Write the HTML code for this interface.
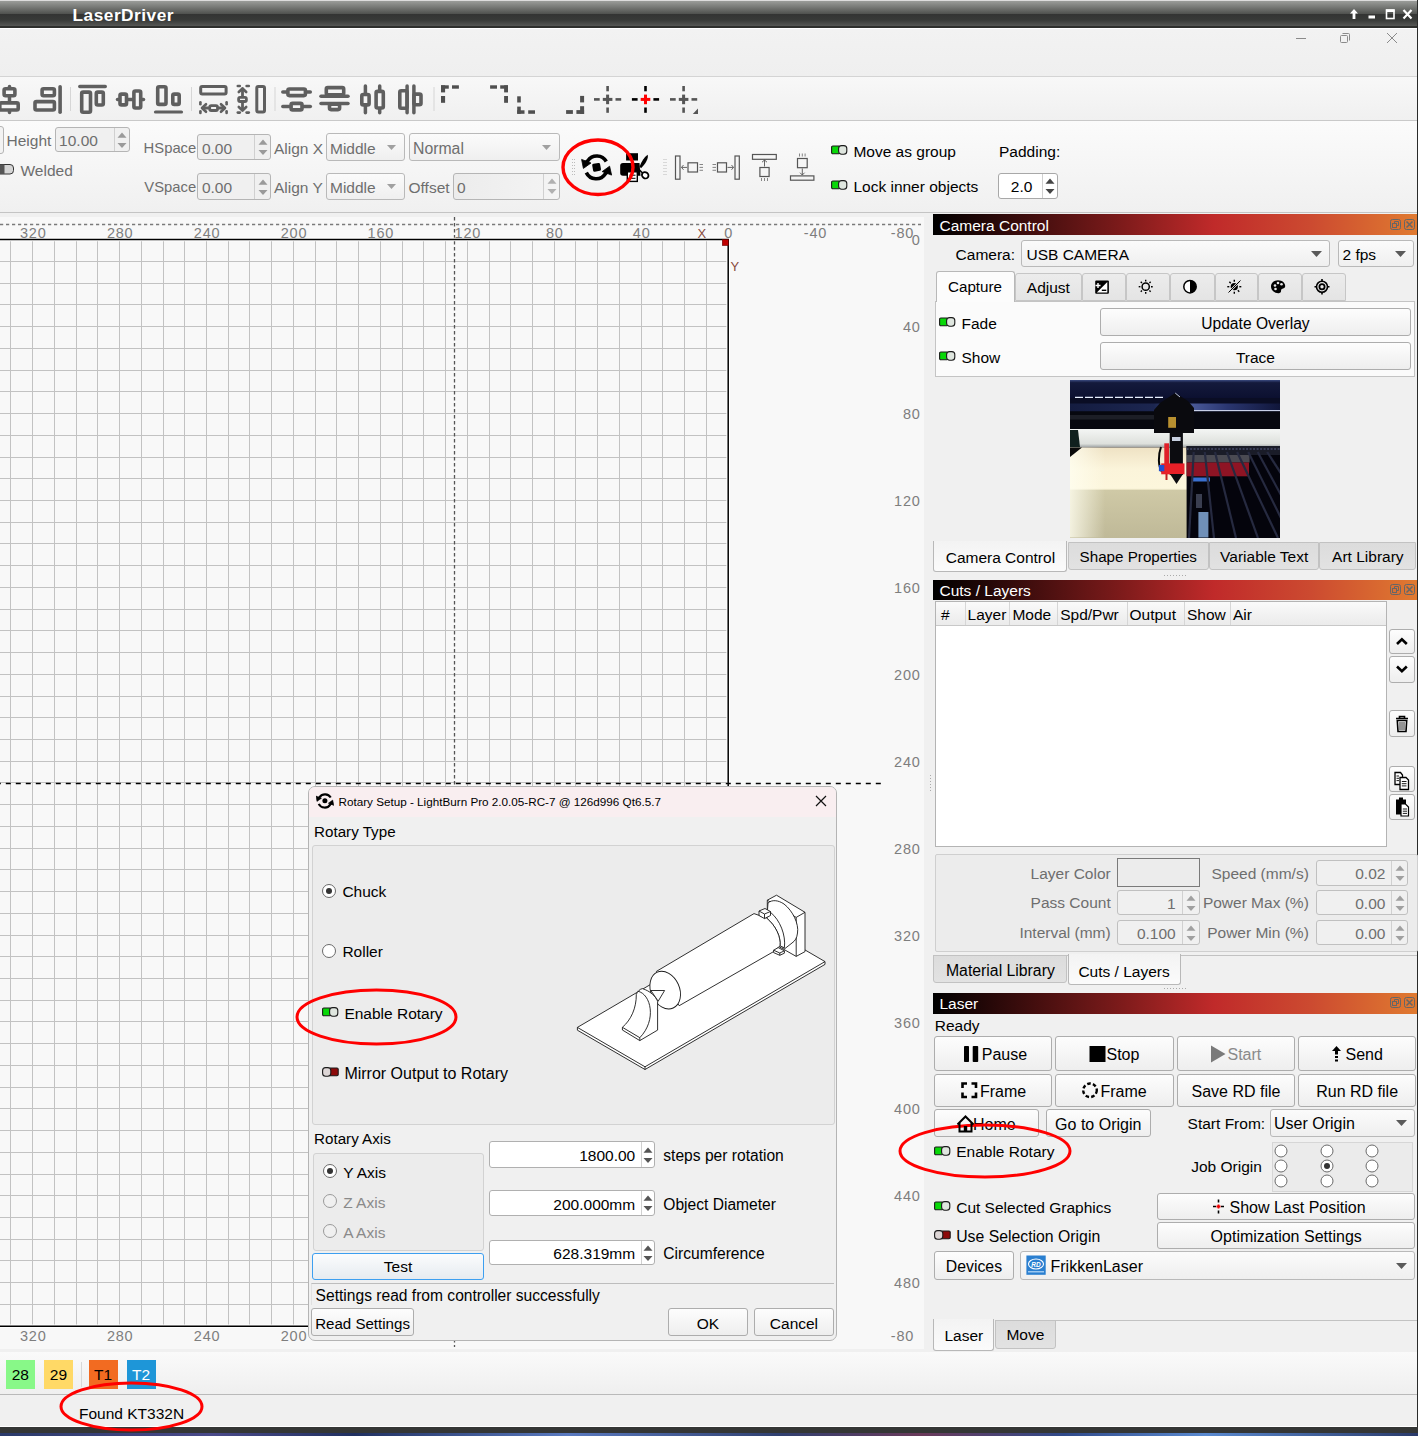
<!DOCTYPE html><html><head><meta charset="utf-8"><style>
html,body{margin:0;padding:0;}body{width:1418px;height:1436px;position:relative;overflow:hidden;background:#f0f0f0;font-family:"Liberation Sans", sans-serif;}
.t{position:absolute;white-space:nowrap;font-family:"Liberation Sans",sans-serif;}
</style></head><body>
<div style="position:absolute;left:0px;top:0px;width:1418px;height:28px;box-sizing:border-box;background:linear-gradient(#dcdcdc 0px,#dcdcdc 1px,#9a9c99 1px,#4f514e 14px,#333433 14px,#383a38 20px,#565755 26px,#2e2f2d 26px,#2e2f2d 28px);"></div>
<div class="t" style="left:72.5px;top:6.75px;font-size:17.3px;line-height:17.3px;color:#fff;font-weight:bold;letter-spacing:0.5px;">LaserDriver</div>
<svg style="position:absolute;left:1348px;top:8px" width="68" height="12"><path d="M6 1L2 5.5H4.6V11H7.4V5.5H10Z" fill="#fff"/><rect x="20.5" y="7.5" width="6.5" height="3" fill="#fff"/><rect x="38.5" y="2" width="7.5" height="8.5" fill="none" stroke="#fff" stroke-width="1.6"/><rect x="38" y="1.5" width="8.5" height="2.5" fill="#fff"/><path d="M55.5 2L63.5 10.5M63.5 2L55.5 10.5" stroke="#fff" stroke-width="2.2"/></svg>
<div style="position:absolute;left:1417px;top:0px;width:1px;height:1436px;box-sizing:border-box;background:#2a2b2a;"></div>
<div style="position:absolute;left:0px;top:28px;width:1417px;height:1px;box-sizing:border-box;background:#fff;"></div>
<div style="position:absolute;left:0px;top:29px;width:1417px;height:47px;box-sizing:border-box;background:linear-gradient(#f2f2f2,#efefef);"></div>
<svg style="position:absolute;left:1290px;top:30px" width="112" height="16"><path d="M6 8.5H16" stroke="#8a8a8a" stroke-width="1"/><rect x="50.5" y="5.5" width="7" height="7" rx="1" fill="none" stroke="#8a8a8a"/><path d="M52.5 3.5H58.5A1 1 0 0 1 59.5 4.5V10.5" fill="none" stroke="#8a8a8a"/><path d="M97 3L107 13M107 3L97 13" stroke="#8a8a8a" stroke-width="1"/></svg>
<div style="position:absolute;left:0px;top:76px;width:1417px;height:1px;box-sizing:border-box;background:#d4d4d4;"></div>
<div style="position:absolute;left:0px;top:77px;width:1417px;height:43px;box-sizing:border-box;background:linear-gradient(#f8f8f8,#f0f0f0);"></div>
<div style="position:absolute;left:0px;top:120px;width:1417px;height:1px;box-sizing:border-box;background:#c9c9c9;"></div>
<div style="position:absolute;left:0px;top:121px;width:1417px;height:91px;box-sizing:border-box;background:linear-gradient(#fbfbfb,#f0f0f0);"></div>
<div style="position:absolute;left:0px;top:212px;width:1417px;height:1px;box-sizing:border-box;background:#c4c4c4;"></div>
<div style="position:absolute;left:0px;top:213px;width:1417px;height:4px;box-sizing:border-box;background:#f0f0f0;"></div>
<svg style="position:absolute;left:0;top:0" width="1418" height="213"><path d="M9.5 86.5L9.5 112.5" stroke="#5f5f5f" stroke-width="3.5" stroke-linecap="round"/><rect x="4.1" y="88.8" width="10.799999999999999" height="6.9" rx="1.5" fill="#f6f6f6" stroke="#5f5f5f" stroke-width="3.6"/><rect x="-0.19999999999999996" y="102.89999999999999" width="18.4" height="7.100000000000003" rx="1.5" fill="#f6f6f6" stroke="#5f5f5f" stroke-width="3.6"/><rect x="42.099999999999994" y="88.8" width="12.300000000000006" height="6.9" rx="1.5" fill="none" stroke="#5f5f5f" stroke-width="3.6"/><rect x="35.0" y="101.6" width="19.4" height="8.4" rx="1.5" fill="none" stroke="#5f5f5f" stroke-width="3.6"/><path d="M60.1 86.8L60.1 112.3" stroke="#5f5f5f" stroke-width="3.6" stroke-linecap="round"/><rect x="70" y="87" width="1" height="24" fill="#d6d6d6"/><path d="M79.8 86.5L105.3 86.5" stroke="#5f5f5f" stroke-width="3.4" stroke-linecap="round"/><rect x="81.7" y="92.1" width="8.799999999999992" height="20.199999999999996" rx="1.5" fill="none" stroke="#5f5f5f" stroke-width="3.6"/><rect x="96.3" y="92.1" width="6.999999999999995" height="12.9" rx="1.5" fill="none" stroke="#5f5f5f" stroke-width="3.6"/><path d="M117.5 99.5L143.5 99.5" stroke="#5f5f5f" stroke-width="3.5" stroke-linecap="round"/><rect x="120.0" y="94.1" width="6.500000000000009" height="10.800000000000006" rx="1.5" fill="#f5f5f5" stroke="#5f5f5f" stroke-width="3.6"/><rect x="133.9" y="91.0" width="6.800000000000006" height="16.999999999999993" rx="1.5" fill="#f5f5f5" stroke="#5f5f5f" stroke-width="3.6"/><rect x="157.70000000000002" y="86.8" width="8.300000000000006" height="17.6" rx="1.5" fill="none" stroke="#5f5f5f" stroke-width="3.6"/><rect x="172.8" y="94.1" width="6.4" height="10.300000000000006" rx="1.5" fill="none" stroke="#5f5f5f" stroke-width="3.6"/><path d="M155.5 112L181.5 112" stroke="#5f5f5f" stroke-width="3.2" stroke-linecap="round"/><rect x="191" y="87" width="1" height="24" fill="#d6d6d6"/><rect x="200.7" y="86.5" width="25.400000000000006" height="7.599999999999994" rx="1.5" fill="none" stroke="#5f5f5f" stroke-width="3"/><path d="M200.4 102.3L200.4 104.3" stroke="#5f5f5f" stroke-width="2.6" stroke-linecap="round"/><path d="M200.4 111.3L200.4 113" stroke="#5f5f5f" stroke-width="2.6" stroke-linecap="round"/><path d="M226.6 102.3L226.6 104.3" stroke="#5f5f5f" stroke-width="2.6" stroke-linecap="round"/><path d="M226.6 111.3L226.6 113" stroke="#5f5f5f" stroke-width="2.6" stroke-linecap="round"/><rect x="209.70000000000002" y="105.7" width="7.7999999999999945" height="4.800000000000009" rx="1.5" fill="none" stroke="#5f5f5f" stroke-width="2.8"/><path d="M203 108L208.3 108" stroke="#5f5f5f" stroke-width="2.8" stroke-linecap="round"/><path d="M218.9 108L224 108" stroke="#5f5f5f" stroke-width="2.8" stroke-linecap="round"/><path d="M206 104.2L202 108L206 111.8M221 104.2L225 108L221 111.8" fill="none" stroke="#5f5f5f" stroke-width="2.6" stroke-linejoin="round" stroke-linecap="round"/><path d="M237.8 86L239.8 86" stroke="#5f5f5f" stroke-width="2.6" stroke-linecap="round"/><path d="M246.6 86L248.8 86" stroke="#5f5f5f" stroke-width="2.6" stroke-linecap="round"/><path d="M237.8 112.6L239.8 112.6" stroke="#5f5f5f" stroke-width="2.6" stroke-linecap="round"/><path d="M246.6 112.6L248.8 112.6" stroke="#5f5f5f" stroke-width="2.6" stroke-linecap="round"/><rect x="238.6" y="97.4" width="7.800000000000023" height="4.100000000000006" rx="1.5" fill="none" stroke="#5f5f5f" stroke-width="2.8"/><path d="M242.5 89L242.5 96" stroke="#5f5f5f" stroke-width="2.8" stroke-linecap="round"/><path d="M242.5 102.9L242.5 110" stroke="#5f5f5f" stroke-width="2.8" stroke-linecap="round"/><path d="M238.8 92L242.5 88.3L246.2 92M238.8 107L242.5 110.7L246.2 107" fill="none" stroke="#5f5f5f" stroke-width="2.6" stroke-linejoin="round" stroke-linecap="round"/><rect x="256.8" y="86.5" width="7.699999999999989" height="25.5" rx="1.5" fill="none" stroke="#5f5f5f" stroke-width="3"/><rect x="274.5" y="87" width="1" height="24" fill="#d6d6d6"/><path d="M282.8 91.9L310.3 91.9" stroke="#5f5f5f" stroke-width="3.5" stroke-linecap="round"/><rect x="287.90000000000003" y="89.0" width="17.499999999999964" height="6.600000000000003" rx="1.5" fill="#f5f5f5" stroke="#5f5f5f" stroke-width="3.6"/><path d="M282.8 106.6L310.3 106.6" stroke="#5f5f5f" stroke-width="3.5" stroke-linecap="round"/><rect x="291.1" y="103.39999999999999" width="10.9" height="6.500000000000009" rx="1.5" fill="#f5f5f5" stroke="#5f5f5f" stroke-width="3.6"/><rect x="326.3" y="87.6" width="17.4" height="7.100000000000003" rx="1.5" fill="#f5f5f5" stroke="#5f5f5f" stroke-width="3.6"/><path d="M321 96.2L348 96.2" stroke="#5f5f5f" stroke-width="3.5" stroke-linecap="round"/><path d="M321 103.5L348 103.5" stroke="#5f5f5f" stroke-width="3.5" stroke-linecap="round"/><rect x="329.5" y="104.3" width="10.099999999999989" height="5.300000000000006" rx="1.5" fill="#f5f5f5" stroke="#5f5f5f" stroke-width="3.6"/><path d="M365.4 86L365.4 112.8" stroke="#5f5f5f" stroke-width="3.5" stroke-linecap="round"/><path d="M379.7 86L379.7 112.8" stroke="#5f5f5f" stroke-width="3.5" stroke-linecap="round"/><rect x="361.8" y="94.5" width="7.299999999999978" height="10.4" rx="1.5" fill="#f5f5f5" stroke="#5f5f5f" stroke-width="3.6"/><rect x="376.1" y="91.39999999999999" width="7.200000000000012" height="16.6" rx="1.5" fill="#f5f5f5" stroke="#5f5f5f" stroke-width="3.6"/><rect x="399.8" y="90.8" width="7.299999999999978" height="17.4" rx="1.5" fill="none" stroke="#5f5f5f" stroke-width="3.6"/><rect x="414.0" y="94.1" width="7.000000000000023" height="10.600000000000003" rx="1.5" fill="none" stroke="#5f5f5f" stroke-width="3.6"/><path d="M407.1 86L407.1 112.8" stroke="#5f5f5f" stroke-width="3.5" stroke-linecap="round"/><path d="M413.9 86L413.9 112.8" stroke="#5f5f5f" stroke-width="3.5" stroke-linecap="round"/><rect x="433.5" y="87" width="1" height="24" fill="#d6d6d6"/><rect x="441" y="85.3" width="7.800000000000011" height="3.4000000000000057" fill="#4f4f4f"/><rect x="441" y="85.3" width="4.100000000000023" height="7.1000000000000085" fill="#4f4f4f"/><rect x="452" y="85.3" width="6.899999999999977" height="3.4000000000000057" fill="#4f4f4f"/><rect x="441" y="96" width="4.100000000000023" height="6.799999999999997" fill="#4f4f4f"/><rect x="490.1" y="85.3" width="6.899999999999977" height="3.4000000000000057" fill="#4f4f4f"/><rect x="500.2" y="85.3" width="7.800000000000011" height="3.4000000000000057" fill="#4f4f4f"/><rect x="504.1" y="85.3" width="3.8999999999999773" height="7.1000000000000085" fill="#4f4f4f"/><rect x="504.1" y="96" width="3.8999999999999773" height="6.799999999999997" fill="#4f4f4f"/><rect x="517.2" y="96.3" width="3.599999999999909" height="6.200000000000003" fill="#4f4f4f"/><rect x="517.2" y="106.6" width="3.599999999999909" height="7.200000000000003" fill="#4f4f4f"/><rect x="517.2" y="110.3" width="7.2999999999999545" height="3.5" fill="#4f4f4f"/><rect x="528.2" y="110.3" width="6.7999999999999545" height="3.5" fill="#4f4f4f"/><rect x="566.1" y="110.1" width="6.7999999999999545" height="3.8000000000000114" fill="#4f4f4f"/><rect x="576.4" y="110.1" width="7.7000000000000455" height="3.8000000000000114" fill="#4f4f4f"/><rect x="580.1" y="106.2" width="4.0" height="7.700000000000003" fill="#4f4f4f"/><rect x="580.1" y="95.9" width="4.0" height="6.5" fill="#4f4f4f"/><rect x="606.3000000000001" y="86" width="2.599999999999909" height="5.299999999999997" fill="#555"/><rect x="606.3000000000001" y="107.5" width="2.599999999999909" height="5.299999999999997" fill="#555"/><rect x="594.0" y="98.10000000000001" width="5.7000000000000455" height="2.5999999999999943" fill="#555"/><rect x="615.5" y="98.10000000000001" width="5.7000000000000455" height="2.5999999999999943" fill="#555"/><rect x="606.1" y="94.60000000000001" width="3.0" height="9.599999999999994" fill="#555"/><rect x="602.8000000000001" y="97.9" width="9.599999999999909" height="3.0" fill="#555"/><rect x="644.2" y="86" width="2.599999999999909" height="5.299999999999997" fill="#000"/><rect x="644.2" y="107.5" width="2.599999999999909" height="5.299999999999997" fill="#000"/><rect x="631.9" y="98.10000000000001" width="5.7000000000000455" height="2.5999999999999943" fill="#000"/><rect x="653.4" y="98.10000000000001" width="5.7000000000000455" height="2.5999999999999943" fill="#000"/><rect x="644.0" y="94.60000000000001" width="3.0" height="9.599999999999994" fill="#ff0000"/><rect x="640.7" y="97.9" width="9.599999999999909" height="3.0" fill="#ff0000"/><rect x="682.3000000000001" y="86" width="2.599999999999909" height="5.299999999999997" fill="#555"/><rect x="682.3000000000001" y="107.5" width="2.599999999999909" height="5.299999999999997" fill="#555"/><rect x="670.0" y="98.10000000000001" width="5.7000000000000455" height="2.5999999999999943" fill="#555"/><rect x="691.5" y="98.10000000000001" width="5.7000000000000455" height="2.5999999999999943" fill="#555"/><rect x="682.1" y="94.60000000000001" width="3.0" height="9.599999999999994" fill="#555"/><rect x="678.8000000000001" y="97.9" width="9.599999999999909" height="3.0" fill="#555"/><path d="M698 108.6V113.9H692.8Z" fill="#555"/><g><path d="M585.8 162.6L587.8 160.7A11 11 0 0 1 606.3 161.5" fill="none" stroke="#000" stroke-width="3.6"/><path d="M581.6 159.4L583.4 168.4L591 163Z" fill="#000" stroke="#000" stroke-width="0.8" stroke-linejoin="round"/><path d="M607.4 171.8L605.4 173.7A11 11 0 0 1 586.3 172.6" fill="none" stroke="#000" stroke-width="3.6"/><path d="M611.6 175.1L609.6 166.2L602.2 171.6Z" fill="#000" stroke="#000" stroke-width="0.8" stroke-linejoin="round"/><rect x="592.6" y="163.3" width="8" height="8" rx="1.5" transform="rotate(-10 596.6 167.3)" fill="#000"/></g><g><rect x="626.1" y="153.2" width="11.9" height="7.3" fill="#000"/><path d="M623 163H639.5L640.5 175.8H623A2.8 2.8 0 0 1 620.2 173V165.8A2.8 2.8 0 0 1 623 163Z" fill="#000"/><rect x="627.3" y="171.8" width="10" height="9.6" fill="#fff" stroke="#000" stroke-width="1.4"/><path d="M629.5 175.2H635.5M629.5 178.3H635.5" stroke="#000" stroke-width="1"/><path d="M647.6 154.8C649 158 645.5 164 641 168.2L639.6 166.5C641.5 161.5 644.5 157 647.6 154.8Z" fill="#000"/><path d="M639 169.5L642.5 173" stroke="#000" stroke-width="1.6"/><ellipse cx="645.2" cy="175.3" rx="3.4" ry="3" transform="rotate(35 645.2 175.3)" fill="#fff" stroke="#000" stroke-width="1.8"/></g><rect x="572" y="159" width="1" height="1" fill="#bbb"/><rect x="574" y="159" width="1" height="1" fill="#bbb"/><rect x="572" y="162" width="1" height="1" fill="#bbb"/><rect x="574" y="162" width="1" height="1" fill="#bbb"/><rect x="572" y="165" width="1" height="1" fill="#bbb"/><rect x="574" y="165" width="1" height="1" fill="#bbb"/><rect x="572" y="168" width="1" height="1" fill="#bbb"/><rect x="574" y="168" width="1" height="1" fill="#bbb"/><rect x="572" y="171" width="1" height="1" fill="#bbb"/><rect x="574" y="171" width="1" height="1" fill="#bbb"/><rect x="572" y="174" width="1" height="1" fill="#bbb"/><rect x="574" y="174" width="1" height="1" fill="#bbb"/><rect x="663.5" y="159" width="1" height="1" fill="#bbb"/><rect x="665.5" y="159" width="1" height="1" fill="#bbb"/><rect x="663.5" y="162" width="1" height="1" fill="#bbb"/><rect x="665.5" y="162" width="1" height="1" fill="#bbb"/><rect x="663.5" y="165" width="1" height="1" fill="#bbb"/><rect x="665.5" y="165" width="1" height="1" fill="#bbb"/><rect x="663.5" y="168" width="1" height="1" fill="#bbb"/><rect x="665.5" y="168" width="1" height="1" fill="#bbb"/><rect x="663.5" y="171" width="1" height="1" fill="#bbb"/><rect x="665.5" y="171" width="1" height="1" fill="#bbb"/><rect x="663.5" y="174" width="1" height="1" fill="#bbb"/><rect x="665.5" y="174" width="1" height="1" fill="#bbb"/><rect x="675.5" y="156.0" width="4.5" height="23.19999999999999" fill="none" stroke="#555" stroke-width="1.2"/><rect x="688.0" y="162.8" width="9.5" height="9.199999999999989" fill="none" stroke="#555" stroke-width="1.2"/><path d="M681.5 167.4H687M683.5 165L681.5 167.4L683.5 169.8" fill="none" stroke="#555" stroke-width="0.9"/><path d="M699.5 164.5H703M699.5 167.4H703M699.5 170.3H703" stroke="#555" stroke-width="0.7"/><rect x="735.0" y="156.0" width="4.2999999999999545" height="23.19999999999999" fill="none" stroke="#555" stroke-width="1.2"/><rect x="717.5" y="162.8" width="9" height="9.199999999999989" fill="none" stroke="#555" stroke-width="1.2"/><path d="M727.5 167.4H733.5M731.5 165L733.5 167.4L731.5 169.8" fill="none" stroke="#555" stroke-width="0.9"/><path d="M712.5 164.5H716M712.5 167.4H716M712.5 170.3H716" stroke="#555" stroke-width="0.7"/><rect x="752.5" y="154.5" width="23.799999999999955" height="4.800000000000011" fill="none" stroke="#555" stroke-width="1.2"/><rect x="759.9" y="167.5" width="9.200000000000045" height="9" fill="none" stroke="#555" stroke-width="1.2"/><path d="M764.5 160V166.5M762 162.2L764.5 160L767 162.2" fill="none" stroke="#555" stroke-width="0.9"/><path d="M761.5 178V181M764.5 178V181M767.5 178V181" stroke="#555" stroke-width="0.7"/><rect x="797.5" y="158.5" width="9.700000000000045" height="9.199999999999989" fill="none" stroke="#555" stroke-width="1.2"/><rect x="790.5" y="175.9" width="23.399999999999977" height="4.299999999999983" fill="none" stroke="#555" stroke-width="1.2"/><path d="M802.3 168.5V175M800 172.7L802.3 175L804.6 172.7" fill="none" stroke="#555" stroke-width="0.9"/><path d="M799.5 153.5V156.5M802.3 153.5V156.5M805.1 153.5V156.5" stroke="#555" stroke-width="0.7"/></svg>
<div style="position:absolute;left:-4px;top:125.5px;width:7.8px;height:28.5px;box-sizing:border-box;border:1px solid #b5b5b5;border-radius:3px;background:#f3f3f3;"></div>
<div class="t" style="left:6.5px;top:132.75px;font-size:15.5px;line-height:15.5px;color:#6e6e6e;">Height</div>
<div style="position:absolute;left:54.6px;top:126.8px;width:75.4px;height:25.60000000000001px;box-sizing:border-box;border:1px solid #b5b5b5;border-radius:3px;background:#f0f0f0;"></div>
<div style="position:absolute;left:113.6px;top:127.8px;width:1.0px;height:23.60000000000001px;box-sizing:border-box;background:#d0d0d0;"></div>
<div class="t" style="left:59.1px;top:132.85px;font-size:15.5px;line-height:15.5px;color:#6e6e6e;">10.00</div>
<svg style="position:absolute;left:116.8px;top:130.6px" width="10" height="18"><path d="M0.5 6.7L5 1.6L9.5 6.7Z" fill="#9a9a9a"/><path d="M0.5 11.9L5 17L9.5 11.9Z" fill="#9a9a9a"/></svg>
<svg style="position:absolute;left:-4px;top:164px" width="18" height="11"><rect x="0.5" y="0.5" width="17" height="9.5" rx="3.5" fill="#d5d5d5" stroke="#333" stroke-width="1"/><path d="M0.5 0.5H8.5V10H0.5Z" fill="#555"/></svg>
<div class="t" style="left:20.5px;top:163.05px;font-size:15.5px;line-height:15.5px;color:#6e6e6e;">Welded</div>
<div class="t" style="left:143.6px;top:140.90px;font-size:14.8px;line-height:14.8px;color:#6e6e6e;">HSpace</div>
<div style="position:absolute;left:197.4px;top:134.4px;width:73.99999999999997px;height:25.799999999999983px;box-sizing:border-box;border:1px solid #b5b5b5;border-radius:3px;background:#f0f0f0;"></div>
<div style="position:absolute;left:253.8px;top:135.4px;width:1.0px;height:23.799999999999983px;box-sizing:border-box;background:#d0d0d0;"></div>
<div class="t" style="left:201.9px;top:140.55px;font-size:15.5px;line-height:15.5px;color:#6e6e6e;">0.00</div>
<svg style="position:absolute;left:257.6px;top:138.3px" width="10" height="18"><path d="M0.5 6.7L5 1.6L9.5 6.7Z" fill="#9a9a9a"/><path d="M0.5 11.9L5 17L9.5 11.9Z" fill="#9a9a9a"/></svg>
<div class="t" style="left:144.3px;top:180.10px;font-size:14.8px;line-height:14.8px;color:#6e6e6e;">VSpace</div>
<div style="position:absolute;left:197.4px;top:173.3px;width:73.99999999999997px;height:26.5px;box-sizing:border-box;border:1px solid #b5b5b5;border-radius:3px;background:#f0f0f0;"></div>
<div style="position:absolute;left:253.8px;top:174.3px;width:1.0px;height:24.5px;box-sizing:border-box;background:#d0d0d0;"></div>
<div class="t" style="left:201.9px;top:179.80px;font-size:15.5px;line-height:15.5px;color:#6e6e6e;">0.00</div>
<svg style="position:absolute;left:257.6px;top:177.55px" width="10" height="18"><path d="M0.5 6.7L5 1.6L9.5 6.7Z" fill="#9a9a9a"/><path d="M0.5 11.9L5 17L9.5 11.9Z" fill="#9a9a9a"/></svg>
<div class="t" style="left:274px;top:140.55px;font-size:15.5px;line-height:15.5px;color:#6e6e6e;">Align X</div>
<div style="position:absolute;left:325.5px;top:133.3px;width:79.80000000000001px;height:28.0px;box-sizing:border-box;border:1px solid #b9b9b9;border-radius:3px;background:linear-gradient(#fbfbfb,#efefef);"></div>
<div class="t" style="left:330px;top:140.85px;font-size:15.5px;line-height:15.5px;color:#6e6e6e;">Middle</div>
<svg style="position:absolute;left:387.0px;top:144.8px" width="9" height="5"><path d="M0 0H9L4.5 5Z" fill="#a0a0a0"/></svg>
<div class="t" style="left:274px;top:179.75px;font-size:15.5px;line-height:15.5px;color:#6e6e6e;">Align Y</div>
<div style="position:absolute;left:325.5px;top:172.5px;width:79.80000000000001px;height:27.900000000000006px;box-sizing:border-box;border:1px solid #b9b9b9;border-radius:3px;background:linear-gradient(#fbfbfb,#efefef);"></div>
<div class="t" style="left:330px;top:180.00px;font-size:15.5px;line-height:15.5px;color:#6e6e6e;">Middle</div>
<svg style="position:absolute;left:387.0px;top:183.95px" width="9" height="5"><path d="M0 0H9L4.5 5Z" fill="#a0a0a0"/></svg>
<div style="position:absolute;left:408.5px;top:133.3px;width:151.89999999999998px;height:28.0px;box-sizing:border-box;border:1px solid #b9b9b9;border-radius:3px;background:linear-gradient(#fbfbfb,#efefef);"></div>
<div class="t" style="left:413px;top:140.70px;font-size:15.8px;line-height:15.8px;color:#6e6e6e;">Normal</div>
<svg style="position:absolute;left:541.5px;top:144.8px" width="9" height="5"><path d="M0 0H9L4.5 5Z" fill="#a0a0a0"/></svg>
<div class="t" style="left:408.5px;top:179.75px;font-size:15.5px;line-height:15.5px;color:#6e6e6e;">Offset</div>
<div style="position:absolute;left:452.5px;top:172.9px;width:107.89999999999998px;height:27.099999999999994px;box-sizing:border-box;border:1px solid #b5b5b5;border-radius:3px;background:linear-gradient(90deg,#ececec,#f4f4f4);"></div>
<div style="position:absolute;left:543.2px;top:173.9px;width:1.0px;height:25.099999999999994px;box-sizing:border-box;background:#d0d0d0;"></div>
<div class="t" style="left:457.0px;top:179.70px;font-size:15.5px;line-height:15.5px;color:#6e6e6e;">0</div>
<svg style="position:absolute;left:546.8px;top:177.45px" width="10" height="18"><path d="M0.5 6.7L5 1.6L9.5 6.7Z" fill="#b0b0b0"/><path d="M0.5 11.9L5 17L9.5 11.9Z" fill="#b0b0b0"/></svg>
<svg style="position:absolute;left:562.5px;top:139.5px;overflow:visible" width="70.0" height="54.5"><ellipse cx="35.0" cy="27.25" rx="35.0" ry="27.25" fill="none" stroke="#ff0000" stroke-width="3.4"/></svg>
<svg style="position:absolute;left:831px;top:145px" width="17" height="10"><rect x="0.6" y="1" width="8.4" height="7.8" rx="1.2" fill="#08d808" stroke="#1a1a1a" stroke-width="1.1"/><rect x="7.6" y="0.6" width="8.2" height="8.6" rx="3" fill="#dfe6df" stroke="#1a1a1a" stroke-width="1.1"/></svg>
<div class="t" style="left:853.4px;top:144.05px;font-size:15.5px;line-height:15.5px;color:#000;">Move as group</div>
<svg style="position:absolute;left:831px;top:180.3px" width="17" height="10"><rect x="0.6" y="1" width="8.4" height="7.8" rx="1.2" fill="#08d808" stroke="#1a1a1a" stroke-width="1.1"/><rect x="7.6" y="0.6" width="8.2" height="8.6" rx="3" fill="#dfe6df" stroke="#1a1a1a" stroke-width="1.1"/></svg>
<div class="t" style="left:853.4px;top:178.55px;font-size:15.5px;line-height:15.5px;color:#000;">Lock inner objects</div>
<div class="t" style="left:999px;top:143.55px;font-size:15.5px;line-height:15.5px;color:#000;">Padding:</div>
<div style="position:absolute;left:997.7px;top:173px;width:60.799999999999955px;height:26px;box-sizing:border-box;border:1px solid #a8a8a8;border-radius:3px;background:#fff;"></div>
<div style="position:absolute;left:1041.8px;top:174px;width:1.0px;height:24px;box-sizing:border-box;background:#d0d0d0;"></div>
<div class="t" style="left:1002.2px;top:179.25px;font-size:15.5px;line-height:15.5px;color:#000;">&nbsp;&nbsp;2.0</div>
<svg style="position:absolute;left:1045.15px;top:177.0px" width="10" height="18"><path d="M0.5 6.7L5 1.6L9.5 6.7Z" fill="#444"/><path d="M0.5 11.9L5 17L9.5 11.9Z" fill="#444"/></svg>
<div style="position:absolute;left:0px;top:217px;width:924px;height:1132px;box-sizing:border-box;background:#f8f8f8;"></div>
<svg style="position:absolute;left:0;top:0" width="924" height="1349"><path d="M706.5 239.5V1326" stroke="#c2c2c2" stroke-width="1"/><path d="M684.5 239.5V1326" stroke="#c2c2c2" stroke-width="1"/><path d="M662.5 239.5V1326" stroke="#c2c2c2" stroke-width="1"/><path d="M641.5 239.5V1326" stroke="#c2c2c2" stroke-width="1"/><path d="M619.5 239.5V1326" stroke="#c2c2c2" stroke-width="1"/><path d="M597.5 239.5V1326" stroke="#c2c2c2" stroke-width="1"/><path d="M575.5 239.5V1326" stroke="#c2c2c2" stroke-width="1"/><path d="M554.5 239.5V1326" stroke="#c2c2c2" stroke-width="1"/><path d="M532.5 239.5V1326" stroke="#c2c2c2" stroke-width="1"/><path d="M510.5 239.5V1326" stroke="#c2c2c2" stroke-width="1"/><path d="M489.5 239.5V1326" stroke="#c2c2c2" stroke-width="1"/><path d="M467.5 239.5V1326" stroke="#c2c2c2" stroke-width="1"/><path d="M445.5 239.5V1326" stroke="#c2c2c2" stroke-width="1"/><path d="M423.5 239.5V1326" stroke="#c2c2c2" stroke-width="1"/><path d="M402.5 239.5V1326" stroke="#c2c2c2" stroke-width="1"/><path d="M380.5 239.5V1326" stroke="#c2c2c2" stroke-width="1"/><path d="M358.5 239.5V1326" stroke="#c2c2c2" stroke-width="1"/><path d="M336.5 239.5V1326" stroke="#c2c2c2" stroke-width="1"/><path d="M315.5 239.5V1326" stroke="#c2c2c2" stroke-width="1"/><path d="M293.5 239.5V1326" stroke="#c2c2c2" stroke-width="1"/><path d="M271.5 239.5V1326" stroke="#c2c2c2" stroke-width="1"/><path d="M249.5 239.5V1326" stroke="#c2c2c2" stroke-width="1"/><path d="M228.5 239.5V1326" stroke="#c2c2c2" stroke-width="1"/><path d="M206.5 239.5V1326" stroke="#c2c2c2" stroke-width="1"/><path d="M184.5 239.5V1326" stroke="#c2c2c2" stroke-width="1"/><path d="M163.5 239.5V1326" stroke="#c2c2c2" stroke-width="1"/><path d="M141.5 239.5V1326" stroke="#c2c2c2" stroke-width="1"/><path d="M119.5 239.5V1326" stroke="#c2c2c2" stroke-width="1"/><path d="M97.5 239.5V1326" stroke="#c2c2c2" stroke-width="1"/><path d="M76.5 239.5V1326" stroke="#c2c2c2" stroke-width="1"/><path d="M54.5 239.5V1326" stroke="#c2c2c2" stroke-width="1"/><path d="M32.5 239.5V1326" stroke="#c2c2c2" stroke-width="1"/><path d="M10.5 239.5V1326" stroke="#c2c2c2" stroke-width="1"/><path d="M0 261.5H728.2" stroke="#c2c2c2" stroke-width="1"/><path d="M0 283.5H728.2" stroke="#c2c2c2" stroke-width="1"/><path d="M0 304.5H728.2" stroke="#c2c2c2" stroke-width="1"/><path d="M0 326.5H728.2" stroke="#c2c2c2" stroke-width="1"/><path d="M0 348.5H728.2" stroke="#c2c2c2" stroke-width="1"/><path d="M0 370.5H728.2" stroke="#c2c2c2" stroke-width="1"/><path d="M0 391.5H728.2" stroke="#c2c2c2" stroke-width="1"/><path d="M0 413.5H728.2" stroke="#c2c2c2" stroke-width="1"/><path d="M0 435.5H728.2" stroke="#c2c2c2" stroke-width="1"/><path d="M0 457.5H728.2" stroke="#c2c2c2" stroke-width="1"/><path d="M0 478.5H728.2" stroke="#c2c2c2" stroke-width="1"/><path d="M0 500.5H728.2" stroke="#c2c2c2" stroke-width="1"/><path d="M0 522.5H728.2" stroke="#c2c2c2" stroke-width="1"/><path d="M0 543.5H728.2" stroke="#c2c2c2" stroke-width="1"/><path d="M0 565.5H728.2" stroke="#c2c2c2" stroke-width="1"/><path d="M0 587.5H728.2" stroke="#c2c2c2" stroke-width="1"/><path d="M0 609.5H728.2" stroke="#c2c2c2" stroke-width="1"/><path d="M0 630.5H728.2" stroke="#c2c2c2" stroke-width="1"/><path d="M0 652.5H728.2" stroke="#c2c2c2" stroke-width="1"/><path d="M0 674.5H728.2" stroke="#c2c2c2" stroke-width="1"/><path d="M0 696.5H728.2" stroke="#c2c2c2" stroke-width="1"/><path d="M0 717.5H728.2" stroke="#c2c2c2" stroke-width="1"/><path d="M0 739.5H728.2" stroke="#c2c2c2" stroke-width="1"/><path d="M0 761.5H728.2" stroke="#c2c2c2" stroke-width="1"/><path d="M0 782.5H728.2" stroke="#c2c2c2" stroke-width="1"/><path d="M0 804.5H728.2" stroke="#c2c2c2" stroke-width="1"/><path d="M0 826.5H728.2" stroke="#c2c2c2" stroke-width="1"/><path d="M0 848.5H728.2" stroke="#c2c2c2" stroke-width="1"/><path d="M0 869.5H728.2" stroke="#c2c2c2" stroke-width="1"/><path d="M0 891.5H728.2" stroke="#c2c2c2" stroke-width="1"/><path d="M0 913.5H728.2" stroke="#c2c2c2" stroke-width="1"/><path d="M0 935.5H728.2" stroke="#c2c2c2" stroke-width="1"/><path d="M0 956.5H728.2" stroke="#c2c2c2" stroke-width="1"/><path d="M0 978.5H728.2" stroke="#c2c2c2" stroke-width="1"/><path d="M0 1000.5H728.2" stroke="#c2c2c2" stroke-width="1"/><path d="M0 1021.5H728.2" stroke="#c2c2c2" stroke-width="1"/><path d="M0 1043.5H728.2" stroke="#c2c2c2" stroke-width="1"/><path d="M0 1065.5H728.2" stroke="#c2c2c2" stroke-width="1"/><path d="M0 1087.5H728.2" stroke="#c2c2c2" stroke-width="1"/><path d="M0 1108.5H728.2" stroke="#c2c2c2" stroke-width="1"/><path d="M0 1130.5H728.2" stroke="#c2c2c2" stroke-width="1"/><path d="M0 1152.5H728.2" stroke="#c2c2c2" stroke-width="1"/><path d="M0 1174.5H728.2" stroke="#c2c2c2" stroke-width="1"/><path d="M0 1195.5H728.2" stroke="#c2c2c2" stroke-width="1"/><path d="M0 1217.5H728.2" stroke="#c2c2c2" stroke-width="1"/><path d="M0 1239.5H728.2" stroke="#c2c2c2" stroke-width="1"/><path d="M0 1260.5H728.2" stroke="#c2c2c2" stroke-width="1"/><path d="M0 1282.5H728.2" stroke="#c2c2c2" stroke-width="1"/><path d="M0 1304.5H728.2" stroke="#c2c2c2" stroke-width="1"/><path d="M0 224.5H921" stroke="#7a7a7a" stroke-width="1.3" stroke-dasharray="3.2 2.8"/><path d="M454.5 217V1347" stroke="#555" stroke-width="1.3" stroke-dasharray="3.5 2.5"/><path d="M0 239.5H728.2V1326.3H0" fill="none" stroke="#fff" stroke-width="3.6"/><path d="M0 239.5H728.2V1326.3H0" fill="none" stroke="#000" stroke-width="1.5"/><path d="M0 783.5H881" stroke="#000" stroke-width="1.6" stroke-dasharray="5 5" stroke-dashoffset="4.2"/><rect x="722.3" y="239.5" width="6" height="6" fill="#c00000" stroke="#600" stroke-width="0.6"/></svg>
<div class="t" style="left:-116.75999999999996px;width:300px;text-align:center;top:226.05px;font-size:14.5px;line-height:14.5px;color:#7e7e7e;letter-spacing:0.8px;">320</div>
<div class="t" style="left:-116.75999999999996px;width:300px;text-align:center;top:1329.35px;font-size:14.5px;line-height:14.5px;color:#7e7e7e;letter-spacing:0.8px;">320</div>
<div class="t" style="left:-29.840000000000003px;width:300px;text-align:center;top:226.05px;font-size:14.5px;line-height:14.5px;color:#7e7e7e;letter-spacing:0.8px;">280</div>
<div class="t" style="left:-29.840000000000003px;width:300px;text-align:center;top:1329.35px;font-size:14.5px;line-height:14.5px;color:#7e7e7e;letter-spacing:0.8px;">280</div>
<div class="t" style="left:57.08000000000007px;width:300px;text-align:center;top:226.05px;font-size:14.5px;line-height:14.5px;color:#7e7e7e;letter-spacing:0.8px;">240</div>
<div class="t" style="left:57.08000000000007px;width:300px;text-align:center;top:1329.35px;font-size:14.5px;line-height:14.5px;color:#7e7e7e;letter-spacing:0.8px;">240</div>
<div class="t" style="left:144.0px;width:300px;text-align:center;top:226.05px;font-size:14.5px;line-height:14.5px;color:#7e7e7e;letter-spacing:0.8px;">200</div>
<div class="t" style="left:144.0px;width:300px;text-align:center;top:1329.35px;font-size:14.5px;line-height:14.5px;color:#7e7e7e;letter-spacing:0.8px;">200</div>
<div class="t" style="left:230.92000000000002px;width:300px;text-align:center;top:226.05px;font-size:14.5px;line-height:14.5px;color:#7e7e7e;letter-spacing:0.8px;">160</div>
<div class="t" style="left:230.92000000000002px;width:300px;text-align:center;top:1329.35px;font-size:14.5px;line-height:14.5px;color:#7e7e7e;letter-spacing:0.8px;">160</div>
<div class="t" style="left:317.84000000000003px;width:300px;text-align:center;top:226.05px;font-size:14.5px;line-height:14.5px;color:#7e7e7e;letter-spacing:0.8px;">120</div>
<div class="t" style="left:317.84000000000003px;width:300px;text-align:center;top:1329.35px;font-size:14.5px;line-height:14.5px;color:#7e7e7e;letter-spacing:0.8px;">120</div>
<div class="t" style="left:404.76px;width:300px;text-align:center;top:226.05px;font-size:14.5px;line-height:14.5px;color:#7e7e7e;letter-spacing:0.8px;">80</div>
<div class="t" style="left:404.76px;width:300px;text-align:center;top:1329.35px;font-size:14.5px;line-height:14.5px;color:#7e7e7e;letter-spacing:0.8px;">80</div>
<div class="t" style="left:491.68000000000006px;width:300px;text-align:center;top:226.05px;font-size:14.5px;line-height:14.5px;color:#7e7e7e;letter-spacing:0.8px;">40</div>
<div class="t" style="left:491.68000000000006px;width:300px;text-align:center;top:1329.35px;font-size:14.5px;line-height:14.5px;color:#7e7e7e;letter-spacing:0.8px;">40</div>
<div class="t" style="left:578.6px;width:300px;text-align:center;top:226.05px;font-size:14.5px;line-height:14.5px;color:#7e7e7e;letter-spacing:0.8px;">0</div>
<div class="t" style="left:578.6px;width:300px;text-align:center;top:1329.35px;font-size:14.5px;line-height:14.5px;color:#7e7e7e;letter-spacing:0.8px;">0</div>
<div class="t" style="left:665.52px;width:300px;text-align:center;top:226.05px;font-size:14.5px;line-height:14.5px;color:#7e7e7e;letter-spacing:0.8px;">-40</div>
<div class="t" style="left:665.52px;width:300px;text-align:center;top:1329.35px;font-size:14.5px;line-height:14.5px;color:#7e7e7e;letter-spacing:0.8px;">-40</div>
<div class="t" style="left:752.44px;width:300px;text-align:center;top:226.05px;font-size:14.5px;line-height:14.5px;color:#7e7e7e;letter-spacing:0.8px;">-80</div>
<div class="t" style="left:752.44px;width:300px;text-align:center;top:1329.35px;font-size:14.5px;line-height:14.5px;color:#7e7e7e;letter-spacing:0.8px;">-80</div>
<div class="t" style="right:497.4px;top:233.25px;font-size:14.5px;line-height:14.5px;color:#7e7e7e;text-align:right;letter-spacing:0.8px;">0</div>
<div class="t" style="right:497.4px;top:320.17px;font-size:14.5px;line-height:14.5px;color:#7e7e7e;text-align:right;letter-spacing:0.8px;">40</div>
<div class="t" style="right:497.4px;top:407.09px;font-size:14.5px;line-height:14.5px;color:#7e7e7e;text-align:right;letter-spacing:0.8px;">80</div>
<div class="t" style="right:497.4px;top:494.01px;font-size:14.5px;line-height:14.5px;color:#7e7e7e;text-align:right;letter-spacing:0.8px;">120</div>
<div class="t" style="right:497.4px;top:580.93px;font-size:14.5px;line-height:14.5px;color:#7e7e7e;text-align:right;letter-spacing:0.8px;">160</div>
<div class="t" style="right:497.4px;top:667.85px;font-size:14.5px;line-height:14.5px;color:#7e7e7e;text-align:right;letter-spacing:0.8px;">200</div>
<div class="t" style="right:497.4px;top:754.77px;font-size:14.5px;line-height:14.5px;color:#7e7e7e;text-align:right;letter-spacing:0.8px;">240</div>
<div class="t" style="right:497.4px;top:841.69px;font-size:14.5px;line-height:14.5px;color:#7e7e7e;text-align:right;letter-spacing:0.8px;">280</div>
<div class="t" style="right:497.4px;top:928.61px;font-size:14.5px;line-height:14.5px;color:#7e7e7e;text-align:right;letter-spacing:0.8px;">320</div>
<div class="t" style="right:497.4px;top:1015.53px;font-size:14.5px;line-height:14.5px;color:#7e7e7e;text-align:right;letter-spacing:0.8px;">360</div>
<div class="t" style="right:497.4px;top:1102.45px;font-size:14.5px;line-height:14.5px;color:#7e7e7e;text-align:right;letter-spacing:0.8px;">400</div>
<div class="t" style="right:497.4px;top:1189.37px;font-size:14.5px;line-height:14.5px;color:#7e7e7e;text-align:right;letter-spacing:0.8px;">440</div>
<div class="t" style="right:497.4px;top:1276.29px;font-size:14.5px;line-height:14.5px;color:#7e7e7e;text-align:right;letter-spacing:0.8px;">480</div>
<div class="t" style="left:697.5px;top:227.00px;font-size:13px;line-height:13px;color:#8a4a3c;">X</div>
<div class="t" style="left:730.5px;top:260.30px;font-size:13px;line-height:13px;color:#8a4a3c;">Y</div>
<div style="position:absolute;left:308px;top:786px;width:529px;height:555px;box-sizing:border-box;border:1px solid #b4b4b4;border-radius:7px;background:#f0f0f0;overflow:hidden;"></div>
<div style="position:absolute;left:309px;top:787px;width:527px;height:30px;box-sizing:border-box;border-radius:6px 6px 0 0;background:#f9eef0;"></div>
<svg style="position:absolute;left:316px;top:792px" width="18" height="18"><g transform="translate(8.9,8.7) scale(0.6)"><path d="M-10.8 -4.1L-8.8 -6A11 11 0 0 1 9.7 -5.2" fill="none" stroke="#000" stroke-width="3.6"/><path d="M-15 -7.8L-13.2 1.2L-5.6 -4.2Z" fill="#000" stroke="#000" stroke-width="0.8" stroke-linejoin="round"/><path d="M10.8 4.5L8.8 6.4A11 11 0 0 1 -10.3 5.3" fill="none" stroke="#000" stroke-width="3.6"/><path d="M15 7.8L13 -1.1L5.6 4.3Z" fill="#000" stroke="#000" stroke-width="0.8" stroke-linejoin="round"/><circle cx="0" cy="0" r="4.2" fill="#000"/></g></svg>
<div class="t" style="left:338.5px;top:795.75px;font-size:11.7px;line-height:11.7px;color:#000;">Rotary Setup - LightBurn Pro 2.0.05-RC-7 @ 126d996 Qt6.5.7</div>
<svg style="position:absolute;left:815px;top:795px" width="12" height="12"><path d="M1 1L11 11M11 1L1 11" stroke="#111" stroke-width="1.2"/></svg>
<div class="t" style="left:314px;top:824.20px;font-size:15.2px;line-height:15.2px;color:#000;">Rotary Type</div>
<div style="position:absolute;left:312px;top:845px;width:523px;height:280px;box-sizing:border-box;border:1px solid #d2d2d2;border-radius:3px;background:#ececec;"></div>
<svg style="position:absolute;left:321px;top:882.5px" width="16" height="16"><circle cx="8" cy="8" r="6.5" fill="#ffffff" stroke="#6a6a6a" stroke-width="1"/><circle cx="8" cy="8" r="3" fill="#333"/></svg>
<div class="t" style="left:342.4px;top:883.75px;font-size:15.5px;line-height:15.5px;color:#000;">Chuck</div>
<svg style="position:absolute;left:321px;top:943px" width="16" height="16"><circle cx="8" cy="8" r="6.5" fill="#ffffff" stroke="#6a6a6a" stroke-width="1"/></svg>
<div class="t" style="left:342.4px;top:944.25px;font-size:15.5px;line-height:15.5px;color:#000;">Roller</div>
<svg style="position:absolute;left:322px;top:1007.3px" width="17" height="10"><rect x="0.6" y="1" width="8.4" height="7.8" rx="1.2" fill="#08d808" stroke="#1a1a1a" stroke-width="1.1"/><rect x="7.6" y="0.6" width="8.2" height="8.6" rx="3" fill="#dfe6df" stroke="#1a1a1a" stroke-width="1.1"/></svg>
<div class="t" style="left:344.4px;top:1005.75px;font-size:15.5px;line-height:15.5px;color:#000;">Enable Rotary</div>
<svg style="position:absolute;left:322px;top:1067.3px" width="17" height="10"><rect x="7.2" y="1" width="9" height="7.8" rx="1.2" fill="#8c0a0a" stroke="#1a1a1a" stroke-width="1.1"/><rect x="0.6" y="0.6" width="8.2" height="8.6" rx="3" fill="#ddd6d6" stroke="#1a1a1a" stroke-width="1.1"/></svg>
<div class="t" style="left:344.4px;top:1066.00px;font-size:16px;line-height:16px;color:#000;">Mirror Output to Rotary</div>
<svg style="position:absolute;left:297px;top:990px;overflow:visible" width="159" height="54"><ellipse cx="79.5" cy="27.0" rx="79.5" ry="27.0" fill="none" stroke="#ff0000" stroke-width="3"/></svg>
<svg style="position:absolute;left:565px;top:880px" width="265" height="195" viewBox="565 880 265 195">
<g fill="#fff" stroke="#1a1a1a" stroke-width="0.9" stroke-linejoin="round">
<path d="M577.4 1027.4V1030.2L645 1069.5L825 964.4V961.6L757 922Z"/>
<path d="M577.4 1027.4L645 1066.8L825 961.6M645 1066.8V1069.5" fill="none"/>
<path d="M767.3 900.2L776.5 895.2L805 912.3V951.6L796.2 956.4L767.3 940Z"/>
<path d="M767.3 900.2L796.2 917.4L805 912.3M796.2 917.4V956.4" fill="none"/>
<path d="M768 903C772 899.5 778 900 784 904C793 911 799 924 797.5 933C797 938 795 941 792 943L784.4 949L766 930Z"/>
<path d="M766.6 918L770.5 912.3C780 920 786 935 784.4 947.8L780 945.9C781 937 776 926 766.6 918Z"/>
<path d="M656.4 971.4L754 913.6L766.6 918C776 926 781 937 780 945.9L773.6 951.6L679.2 1005.7Z"/>
<path d="M759 911L765 908.5L770.5 911.5V915.5L764.5 918.6L759 915.5Z"/>
<path d="M759 911L764.5 914L770.5 911.5M764.5 914V918.6" fill="none"/>
<path d="M773.6 950.2L778.2 947.6L784.4 950.8V953.2L779.8 955.3L773.6 952.6Z"/>
<path d="M773.6 950.2L779.8 953L784.4 950.8M779.8 953V955.3" fill="none"/>
<ellipse cx="665.2" cy="990.1" rx="14.3" ry="19.6" transform="rotate(-24 665.2 990.1)"/>
<path d="M622.4 1027.3C631 1020 636.5 1008 636.3 994.3C637.5 991.5 640 989 642.4 988.6C650 991 655.5 996 657.6 1001.2V1030.1L639.8 1040.6L622.4 1030Z"/>
<path d="M622.4 1027.3L639.8 1037.7M639.8 1037.7V1040.6M637.8 991.2C651 994 657 1020 639.8 1037.7" fill="none"/>
<path d="M650.9 990.5L664.6 990.5L658.2 1001.2Z"/>
</g></svg>
<div class="t" style="left:314px;top:1131.20px;font-size:15.2px;line-height:15.2px;color:#000;">Rotary Axis</div>
<div style="position:absolute;left:312.6px;top:1152.6px;width:171.89999999999998px;height:98.70000000000005px;box-sizing:border-box;border:1px solid #d2d2d2;border-radius:3px;background:#ececec;"></div>
<svg style="position:absolute;left:322px;top:1163.2px" width="16" height="16"><circle cx="8" cy="8" r="6.5" fill="#ffffff" stroke="#6a6a6a" stroke-width="1"/><circle cx="8" cy="8" r="3" fill="#333"/></svg>
<div class="t" style="left:343.2px;top:1164.65px;font-size:15.5px;line-height:15.5px;color:#000;">Y Axis</div>
<svg style="position:absolute;left:322px;top:1193.1px" width="16" height="16"><circle cx="8" cy="8" r="6.5" fill="#f0f0f0" stroke="#9a9a9a" stroke-width="1"/></svg>
<div class="t" style="left:343.2px;top:1194.55px;font-size:15.5px;line-height:15.5px;color:#8a8a8a;">Z Axis</div>
<svg style="position:absolute;left:322px;top:1223.1px" width="16" height="16"><circle cx="8" cy="8" r="6.5" fill="#f0f0f0" stroke="#9a9a9a" stroke-width="1"/></svg>
<div class="t" style="left:343.2px;top:1224.55px;font-size:15.5px;line-height:15.5px;color:#8a8a8a;">A Axis</div>
<div style="position:absolute;left:311.6px;top:1252.7px;width:172.89999999999998px;height:27.5px;box-sizing:border-box;border:1px solid #3d9ff0;border-radius:3px;background:linear-gradient(#fbfcfd,#e6ebf0);"></div>
<div class="t" style="left:248px;width:300px;text-align:center;top:1258.75px;font-size:15.5px;line-height:15.5px;color:#000;">Test</div>
<div style="position:absolute;left:489.4px;top:1141.4px;width:165.80000000000007px;height:26.199999999999818px;box-sizing:border-box;border:1px solid #b0b0b0;border-radius:3px;background:#fff;"></div>
<div style="position:absolute;left:641.2px;top:1142.4px;width:1.0px;height:24.199999999999818px;box-sizing:border-box;background:#d0d0d0;"></div>
<div class="t" style="right:782.8px;top:1147.75px;font-size:15.5px;line-height:15.5px;color:#000;text-align:right;">1800.00</div>
<svg style="position:absolute;left:643.2px;top:1145.5px" width="10" height="18"><path d="M0.5 6.7L5 1.6L9.5 6.7Z" fill="#555"/><path d="M0.5 11.9L5 17L9.5 11.9Z" fill="#555"/></svg>
<div class="t" style="left:663.3px;top:1148.20px;font-size:15.6px;line-height:15.6px;color:#000;">steps per rotation</div>
<div style="position:absolute;left:489.4px;top:1190.4px;width:165.80000000000007px;height:25.899999999999864px;box-sizing:border-box;border:1px solid #b0b0b0;border-radius:3px;background:#fff;"></div>
<div style="position:absolute;left:641.2px;top:1191.4px;width:1.0px;height:23.899999999999864px;box-sizing:border-box;background:#d0d0d0;"></div>
<div class="t" style="right:782.8px;top:1196.60px;font-size:15.5px;line-height:15.5px;color:#000;text-align:right;">200.000mm</div>
<svg style="position:absolute;left:643.2px;top:1194.35px" width="10" height="18"><path d="M0.5 6.7L5 1.6L9.5 6.7Z" fill="#555"/><path d="M0.5 11.9L5 17L9.5 11.9Z" fill="#555"/></svg>
<div class="t" style="left:663.3px;top:1197.05px;font-size:15.6px;line-height:15.6px;color:#000;">Object Diameter</div>
<div style="position:absolute;left:489.4px;top:1239.7px;width:165.80000000000007px;height:25.59999999999991px;box-sizing:border-box;border:1px solid #b0b0b0;border-radius:3px;background:#fff;"></div>
<div style="position:absolute;left:641.2px;top:1240.7px;width:1.0px;height:23.59999999999991px;box-sizing:border-box;background:#d0d0d0;"></div>
<div class="t" style="right:782.8px;top:1245.75px;font-size:15.5px;line-height:15.5px;color:#000;text-align:right;">628.319mm</div>
<svg style="position:absolute;left:643.2px;top:1243.5px" width="10" height="18"><path d="M0.5 6.7L5 1.6L9.5 6.7Z" fill="#555"/><path d="M0.5 11.9L5 17L9.5 11.9Z" fill="#555"/></svg>
<div class="t" style="left:663.3px;top:1246.20px;font-size:15.6px;line-height:15.6px;color:#000;">Circumference</div>
<div style="position:absolute;left:311.4px;top:1283px;width:522.2px;height:22.40000000000009px;box-sizing:border-box;border-top:1px solid #bdbdbd;border-left:1px solid #e0e0e0;background:#f0f0f0;"></div>
<div class="t" style="left:315.6px;top:1287.50px;font-size:15.6px;line-height:15.6px;color:#000;">Settings read from controller successfully</div>
<div style="position:absolute;left:311.4px;top:1308.4px;width:102.30000000000001px;height:28.09999999999991px;box-sizing:border-box;border:1px solid #adadad;border-radius:3px;background:linear-gradient(#fdfdfd,#eeeeee);"></div>
<div class="t" style="left:212.54999999999995px;width:300px;text-align:center;top:1316.40px;font-size:15.1px;line-height:15.1px;color:#000;">Read Settings</div>
<div style="position:absolute;left:668.2px;top:1308.4px;width:79.5px;height:28.09999999999991px;box-sizing:border-box;border:1px solid #adadad;border-radius:3px;background:linear-gradient(#fdfdfd,#eeeeee);"></div>
<div class="t" style="left:557.95px;width:300px;text-align:center;top:1316.20px;font-size:15.5px;line-height:15.5px;color:#000;">OK</div>
<div style="position:absolute;left:754.3px;top:1308.4px;width:79.30000000000007px;height:28.09999999999991px;box-sizing:border-box;border:1px solid #adadad;border-radius:3px;background:linear-gradient(#fdfdfd,#eeeeee);"></div>
<div class="t" style="left:643.95px;width:300px;text-align:center;top:1316.20px;font-size:15.5px;line-height:15.5px;color:#000;">Cancel</div>
<div style="position:absolute;left:933px;top:214.3px;width:484px;height:20.5px;box-sizing:border-box;background:linear-gradient(90deg,#000 0%,#3a0c0c 18%,#7a1a1a 38%,#c02a2a 58%,#cc4a30 78%,#e07a30 100%);"></div>
<div class="t" style="left:939.5px;top:217.60px;font-size:15.5px;line-height:15.5px;color:#fff;">Camera Control</div>
<svg style="position:absolute;left:1389px;top:218.55px" width="28" height="12"><rect x="1.5" y="0.5" width="10" height="10" rx="2" fill="none" stroke="#666" stroke-width="1"/><rect x="3.5" y="4.5" width="4" height="4" fill="none" stroke="#666"/><path d="M5.5 4.5V2.5H9.5V6.5H7.5" fill="none" stroke="#666"/><rect x="15.5" y="0.5" width="10" height="10" rx="2" fill="none" stroke="#666" stroke-width="1"/><path d="M17.5 2.5L23.5 8.5M23.5 2.5L17.5 8.5" stroke="#666" stroke-width="1.5"/></svg>
<div class="t" style="right:403px;top:246.75px;font-size:15.5px;line-height:15.5px;color:#000;text-align:right;">Camera:</div>
<div style="position:absolute;left:1021.2px;top:239.7px;width:309.0px;height:27.69999999999999px;box-sizing:border-box;border:1px solid #b9b9b9;border-radius:3px;background:linear-gradient(#fbfbfb,#efefef);"></div>
<div class="t" style="left:1026.5px;top:247.10px;font-size:15.5px;line-height:15.5px;color:#000;">USB CAMERA</div>
<svg style="position:absolute;left:1310.8px;top:250.54999999999998px" width="11" height="6"><path d="M0 0H11L5.5 6Z" fill="#5a5a5a"/></svg>
<div style="position:absolute;left:1337.6px;top:239.7px;width:76.60000000000014px;height:27.69999999999999px;box-sizing:border-box;border:1px solid #b9b9b9;border-radius:3px;background:linear-gradient(#fbfbfb,#efefef);"></div>
<div class="t" style="left:1342.5px;top:247.10px;font-size:15.5px;line-height:15.5px;color:#000;">2 fps</div>
<svg style="position:absolute;left:1394.5px;top:250.54999999999998px" width="11" height="6"><path d="M0 0H11L5.5 6Z" fill="#5a5a5a"/></svg>
<div style="position:absolute;left:935.1px;top:300.5px;width:480.4px;height:76.0px;box-sizing:border-box;border:1px solid #c4c4c4;background:#fbfbfb;"></div>
<div style="position:absolute;left:935.5px;top:270.5px;width:79.0px;height:31.5px;box-sizing:border-box;border:1px solid #b8b8b8;border-bottom:none;border-radius:3px 3px 0 0;background:#fcfcfc;"></div>
<div class="t" style="left:825.0px;width:300px;text-align:center;top:279.15px;font-size:15.2px;line-height:15.2px;color:#000;">Capture</div>
<div style="position:absolute;left:1014.5px;top:272.5px;width:67.79999999999995px;height:28.5px;box-sizing:border-box;border:1px solid #c6c6c6;border-radius:3px 3px 0 0;background:linear-gradient(#ececec,#e4e4e4);"></div>
<div class="t" style="left:898.4000000000001px;width:300px;text-align:center;top:280.00px;font-size:15.5px;line-height:15.5px;color:#000;">Adjust</div>
<div style="position:absolute;left:1082.3px;top:272.5px;width:44.0px;height:28.5px;box-sizing:border-box;border:1px solid #c6c6c6;border-radius:3px 3px 0 0;background:linear-gradient(#ececec,#e4e4e4);"></div>
<div style="position:absolute;left:1126.3px;top:272.5px;width:44.100000000000136px;height:28.5px;box-sizing:border-box;border:1px solid #c6c6c6;border-radius:3px 3px 0 0;background:linear-gradient(#ececec,#e4e4e4);"></div>
<div style="position:absolute;left:1170.4px;top:272.5px;width:44.19999999999982px;height:28.5px;box-sizing:border-box;border:1px solid #c6c6c6;border-radius:3px 3px 0 0;background:linear-gradient(#ececec,#e4e4e4);"></div>
<div style="position:absolute;left:1214.6px;top:272.5px;width:43.80000000000018px;height:28.5px;box-sizing:border-box;border:1px solid #c6c6c6;border-radius:3px 3px 0 0;background:linear-gradient(#ececec,#e4e4e4);"></div>
<div style="position:absolute;left:1258.4px;top:272.5px;width:44.0px;height:28.5px;box-sizing:border-box;border:1px solid #c6c6c6;border-radius:3px 3px 0 0;background:linear-gradient(#ececec,#e4e4e4);"></div>
<div style="position:absolute;left:1302.4px;top:272.5px;width:43.19999999999982px;height:28.5px;box-sizing:border-box;border:1px solid #c6c6c6;border-radius:3px 3px 0 0;background:linear-gradient(#ececec,#e4e4e4);"></div>
<svg style="position:absolute;left:0;top:0;pointer-events:none" width="1418" height="310"><rect x="1095.2" y="280.4" width="13.7" height="13.3" rx="1" fill="#000"/><path d="M1107.3 282L1096.8 292.5H1107.3Z" fill="#fff"/><path d="M1098 283V288M1095.5 285.5H1100.5" stroke="#fff" stroke-width="1.4"/><path d="M1101.8 290.3H1106.3" stroke="#000" stroke-width="1.4"/><circle cx="1145.7" cy="286.7" r="3.6" fill="none" stroke="#000" stroke-width="1.5"/><path d="M1151.00 286.70L1152.70 286.70" stroke="#000" stroke-width="1.4"/><path d="M1149.45 290.45L1150.65 291.65" stroke="#000" stroke-width="1.4"/><path d="M1145.70 292.00L1145.70 293.70" stroke="#000" stroke-width="1.4"/><path d="M1141.95 290.45L1140.75 291.65" stroke="#000" stroke-width="1.4"/><path d="M1140.40 286.70L1138.70 286.70" stroke="#000" stroke-width="1.4"/><path d="M1141.95 282.95L1140.75 281.75" stroke="#000" stroke-width="1.4"/><path d="M1145.70 281.40L1145.70 279.70" stroke="#000" stroke-width="1.4"/><path d="M1149.45 282.95L1150.65 281.75" stroke="#000" stroke-width="1.4"/><circle cx="1190" cy="286.7" r="6.2" fill="#fff" stroke="#000" stroke-width="1.5"/><path d="M1190 280.5A6.2 6.2 0 0 1 1190 292.9Z" fill="#000"/><circle cx="1234.3" cy="286.7" r="3.6" fill="#000"/><path d="M1239.30 286.70L1241.30 286.70" stroke="#000" stroke-width="1.4"/><path d="M1237.84 290.24L1239.25 291.65" stroke="#000" stroke-width="1.4"/><path d="M1234.30 291.70L1234.30 293.70" stroke="#000" stroke-width="1.4"/><path d="M1230.76 290.24L1229.35 291.65" stroke="#000" stroke-width="1.4"/><path d="M1229.30 286.70L1227.30 286.70" stroke="#000" stroke-width="1.4"/><path d="M1230.76 283.16L1229.35 281.75" stroke="#000" stroke-width="1.4"/><path d="M1234.30 281.70L1234.30 279.70" stroke="#000" stroke-width="1.4"/><path d="M1237.84 283.16L1239.25 281.75" stroke="#000" stroke-width="1.4"/><path d="M1228 293L1241 280" stroke="#e8e8e8" stroke-width="2.2"/><path d="M1228.5 292.5L1240.5 280.5" stroke="#000" stroke-width="1"/><path d="M1278 280.2C1282.5 280.2 1285.2 283 1285.2 286C1285.2 288.5 1282.5 288.3 1281.5 289.3C1280.5 290.5 1282 292.5 1279 293.2C1275 293.6 1271 290.5 1271 286.5C1271 283 1274 280.2 1278 280.2Z" fill="#000"/><circle cx="1275" cy="285.5" r="1.3" fill="#e8e8e8"/><circle cx="1278" cy="283" r="1.3" fill="#e8e8e8"/><circle cx="1281.5" cy="284.3" r="1.3" fill="#e8e8e8"/><circle cx="1275.5" cy="289" r="1.3" fill="#e8e8e8"/><circle cx="1322" cy="286.7" r="5.5" fill="none" stroke="#000" stroke-width="1.6"/><circle cx="1322" cy="286.7" r="2.6" fill="none" stroke="#000" stroke-width="1.8"/><path d="M1322 279V281.5M1322 292V294.5M1314.5 286.7H1317M1327 286.7H1329.5" stroke="#000" stroke-width="1.6"/></svg>
<svg style="position:absolute;left:939.2px;top:317.3px" width="17" height="10"><rect x="0.6" y="1" width="8.4" height="7.8" rx="1.2" fill="#08d808" stroke="#1a1a1a" stroke-width="1.1"/><rect x="7.6" y="0.6" width="8.2" height="8.6" rx="3" fill="#dfe6df" stroke="#1a1a1a" stroke-width="1.1"/></svg>
<div class="t" style="left:961.5px;top:315.75px;font-size:15.5px;line-height:15.5px;color:#000;">Fade</div>
<svg style="position:absolute;left:939.2px;top:351.3px" width="17" height="10"><rect x="0.6" y="1" width="8.4" height="7.8" rx="1.2" fill="#08d808" stroke="#1a1a1a" stroke-width="1.1"/><rect x="7.6" y="0.6" width="8.2" height="8.6" rx="3" fill="#dfe6df" stroke="#1a1a1a" stroke-width="1.1"/></svg>
<div class="t" style="left:961.5px;top:349.75px;font-size:15.5px;line-height:15.5px;color:#000;">Show</div>
<div style="position:absolute;left:1100.2px;top:308.3px;width:310.5px;height:28.099999999999966px;box-sizing:border-box;border:1px solid #adadad;border-radius:3px;background:linear-gradient(#fdfdfd,#eeeeee);"></div>
<div class="t" style="left:1105.45px;width:300px;text-align:center;top:316.05px;font-size:15.6px;line-height:15.6px;color:#000;">Update Overlay</div>
<div style="position:absolute;left:1100.2px;top:342.4px;width:310.5px;height:28.100000000000023px;box-sizing:border-box;border:1px solid #adadad;border-radius:3px;background:linear-gradient(#fdfdfd,#eeeeee);"></div>
<div class="t" style="left:1105.45px;width:300px;text-align:center;top:350.20px;font-size:15.5px;line-height:15.5px;color:#000;">Trace</div>
<svg style="position:absolute;left:1070px;top:380px" width="210" height="158" viewBox="1070 380 210 158">
<defs>
<linearGradient id="bedg" x1="0" y1="0" x2="0" y2="1"><stop offset="0" stop-color="#efe2c4"/><stop offset="0.5" stop-color="#fbf4da"/><stop offset="0.95" stop-color="#fcf6dc"/><stop offset="1" stop-color="#d8d2b0"/></linearGradient>
<linearGradient id="bedl" x1="0" y1="0" x2="0" y2="1"><stop offset="0" stop-color="#cfc9a6"/><stop offset="1" stop-color="#bfb998"/></linearGradient>
<linearGradient id="bedx" x1="0" y1="0" x2="1" y2="0"><stop offset="0" stop-color="#fffef0" stop-opacity="0.8"/><stop offset="0.3" stop-color="#fffef0" stop-opacity="0"/></linearGradient>
<linearGradient id="topg" x1="0" y1="0" x2="0" y2="1"><stop offset="0" stop-color="#3a4a80"/><stop offset="0.15" stop-color="#141a3c"/><stop offset="1" stop-color="#0c1030"/></linearGradient>
<linearGradient id="bandg" x1="0" y1="0" x2="1" y2="0"><stop offset="0" stop-color="#141c40"/><stop offset="0.4" stop-color="#1c2650"/><stop offset="0.55" stop-color="#5060a0"/><stop offset="0.75" stop-color="#2a3670"/><stop offset="1" stop-color="#10163a"/></linearGradient>
<linearGradient id="wallg" x1="0" y1="0" x2="0" y2="1"><stop offset="0" stop-color="#f4f6f4"/><stop offset="0.8" stop-color="#dde0dc"/><stop offset="1" stop-color="#9a9ea0"/></linearGradient>
</defs>
<rect x="1070" y="380" width="210" height="158" fill="#06060e"/>
<rect x="1070" y="380" width="210" height="18" fill="url(#topg)"/>
<rect x="1070" y="398" width="210" height="13" fill="#0a0d24"/>
<rect x="1070" y="403.5" width="210" height="8" fill="url(#bandg)"/>
<path d="M1075 397.4H1164" stroke="#e8f0ff" stroke-width="1.2" stroke-dasharray="8 2"/>
<path d="M1191 410.6H1280" stroke="#c8d0e8" stroke-width="1.2"/>
<rect x="1070" y="411.5" width="210" height="17" fill="#07080f"/>
<rect x="1070" y="415" width="85" height="4.5" fill="#1c1e26"/>
<rect x="1070" y="429" width="210" height="18.5" fill="url(#wallg)"/>
<path d="M1070 430H1078L1080 447L1070 457Z" fill="#10201e"/>
<rect x="1070" y="447.5" width="117" height="43" fill="url(#bedg)"/>
<rect x="1070" y="490" width="117" height="48" fill="url(#bedl)"/>
<rect x="1070" y="447.5" width="117" height="90" fill="url(#bedx)"/>
<path d="M1070 447.5L1082 447.5L1070 457Z" fill="#0a0a0a"/>
<rect x="1186.6" y="446" width="93.4" height="92" fill="#04040c"/>
<rect x="1186.6" y="446" width="93.4" height="9" fill="#1a1c28"/>
<path d="M1186.6 449H1280" stroke="#3a3e58" stroke-width="2" stroke-dasharray="2 1.5"/>
<rect x="1186.6" y="455" width="63" height="7.5" fill="#4a4a52"/>
<rect x="1186.6" y="462.5" width="62.4" height="13.8" fill="#8e1424"/>
<rect x="1193" y="477.5" width="17" height="4" fill="#3a70d0"/>
<rect x="1198.4" y="512" width="10" height="25.5" fill="#7090b8"/>
<rect x="1196" y="494" width="6" height="14" fill="#3a3e50"/>
<g stroke="#262a40" stroke-width="2.2" fill="none">
<path d="M1193.7 452L1189 538"/><path d="M1204.8 452L1214 538"/><path d="M1215 452L1236 538"/><path d="M1226.9 452L1258 538"/><path d="M1237.1 452L1278 538"/><path d="M1248.2 452L1282 520"/><path d="M1257.7 452L1282 497"/><path d="M1267.2 452L1282 475"/>
</g>
<path d="M1175.2 393L1160 403L1154 410V433H1194V408L1188 401Z" fill="#0a0a0e"/>
<path d="M1175.2 393L1180 397" stroke="#c0c8e0" stroke-width="1"/>
<rect x="1168.2" y="417" width="7.8" height="10.8" fill="#b89030"/>
<rect x="1169.7" y="433" width="13.2" height="42" fill="#0c0c10"/>
<rect x="1172" y="437" width="8.6" height="4" fill="#c8d0e0"/>
<path d="M1161 447C1158 455 1158 466 1162 472" fill="none" stroke="#050505" stroke-width="2"/>
<rect x="1164.3" y="443.3" width="4.7" height="24.8" fill="#e02028"/>
<path d="M1161.2 463.4H1184.5V474.3H1161.2Z" fill="#e82028"/>
<rect x="1158.9" y="465" width="5.4" height="6.2" fill="#2050d0"/>
<path d="M1170 474L1183 474L1176.5 484Z" fill="#0c0c10"/>
<rect x="1165.5" y="474" width="2" height="6" fill="#c02020"/>
</svg>
<div style="position:absolute;left:933.3px;top:540.5px;width:134.20000000000005px;height:31.5px;box-sizing:border-box;border:1px solid #b8b8b8;border-top:none;border-radius:0 0 3px 3px;background:linear-gradient(#f3f3f3,#fbfbfb);"></div>
<div class="t" style="left:850.4px;width:300px;text-align:center;top:549.50px;font-size:15.5px;line-height:15.5px;color:#000;">Camera Control</div>
<div style="position:absolute;left:1067.5px;top:542px;width:141.5px;height:27.5px;box-sizing:border-box;border:1px solid #c2c2c2;border-radius:0 0 3px 3px;background:linear-gradient(#dcdcdc,#e2e2e2);"></div>
<div class="t" style="left:988.25px;width:300px;text-align:center;top:548.65px;font-size:15.2px;line-height:15.2px;color:#000;">Shape Properties</div>
<div style="position:absolute;left:1209px;top:542px;width:110.40000000000009px;height:27.5px;box-sizing:border-box;border:1px solid #c2c2c2;border-radius:0 0 3px 3px;background:linear-gradient(#dcdcdc,#e2e2e2);"></div>
<div class="t" style="left:1114.2px;width:300px;text-align:center;top:548.50px;font-size:15.5px;line-height:15.5px;color:#000;">Variable Text</div>
<div style="position:absolute;left:1319.4px;top:542px;width:96.89999999999986px;height:27.5px;box-sizing:border-box;border:1px solid #c2c2c2;border-radius:0 0 3px 3px;background:linear-gradient(#dcdcdc,#e2e2e2);"></div>
<div class="t" style="left:1217.85px;width:300px;text-align:center;top:548.50px;font-size:15.5px;line-height:15.5px;color:#000;">Art Library</div>
<svg style="position:absolute;left:1164px;top:573.5px" width="24" height="4"><rect x="0" y="1" width="1" height="1" fill="#aaa"/><rect x="3" y="1" width="1" height="1" fill="#aaa"/><rect x="6" y="1" width="1" height="1" fill="#aaa"/><rect x="9" y="1" width="1" height="1" fill="#aaa"/><rect x="12" y="1" width="1" height="1" fill="#aaa"/><rect x="15" y="1" width="1" height="1" fill="#aaa"/><rect x="18" y="1" width="1" height="1" fill="#aaa"/><rect x="21" y="1" width="1" height="1" fill="#aaa"/></svg>
<div style="position:absolute;left:933px;top:579.7px;width:484px;height:20.59999999999991px;box-sizing:border-box;background:linear-gradient(90deg,#000 0%,#3a0c0c 18%,#7a1a1a 38%,#c02a2a 58%,#cc4a30 78%,#e07a30 100%);"></div>
<div class="t" style="left:939.5px;top:583.05px;font-size:15.5px;line-height:15.5px;color:#fff;">Cuts / Layers</div>
<svg style="position:absolute;left:1389px;top:584.0px" width="28" height="12"><rect x="1.5" y="0.5" width="10" height="10" rx="2" fill="none" stroke="#666" stroke-width="1"/><rect x="3.5" y="4.5" width="4" height="4" fill="none" stroke="#666"/><path d="M5.5 4.5V2.5H9.5V6.5H7.5" fill="none" stroke="#666"/><rect x="15.5" y="0.5" width="10" height="10" rx="2" fill="none" stroke="#666" stroke-width="1"/><path d="M17.5 2.5L23.5 8.5M23.5 2.5L17.5 8.5" stroke="#666" stroke-width="1.5"/></svg>
<div style="position:absolute;left:934.5px;top:600.6px;width:452.5px;height:246.89999999999998px;box-sizing:border-box;border:1px solid #b4b4b4;background:#fff;"></div>
<div style="position:absolute;left:935.5px;top:601.5px;width:450.5px;height:24.0px;box-sizing:border-box;background:linear-gradient(#fafafa,#ebebeb);border-bottom:1px solid #c8c8c8;box-sizing:border-box;"></div>
<div style="position:absolute;left:964.5px;top:602px;width:1.0px;height:23px;box-sizing:border-box;background:#d6d6d6;"></div>
<div style="position:absolute;left:1009.3px;top:602px;width:1.0px;height:23px;box-sizing:border-box;background:#d6d6d6;"></div>
<div style="position:absolute;left:1057.3px;top:602px;width:1.0px;height:23px;box-sizing:border-box;background:#d6d6d6;"></div>
<div style="position:absolute;left:1126.5px;top:602px;width:1.0px;height:23px;box-sizing:border-box;background:#d6d6d6;"></div>
<div style="position:absolute;left:1184.1px;top:602px;width:1.0px;height:23px;box-sizing:border-box;background:#d6d6d6;"></div>
<div style="position:absolute;left:1230.2px;top:602px;width:1.0px;height:23px;box-sizing:border-box;background:#d6d6d6;"></div>
<div class="t" style="left:941px;top:606.55px;font-size:15.5px;line-height:15.5px;color:#000;">#</div>
<div class="t" style="left:967.6px;top:606.55px;font-size:15.5px;line-height:15.5px;color:#000;">Layer</div>
<div class="t" style="left:1012.4px;top:606.55px;font-size:15.5px;line-height:15.5px;color:#000;">Mode</div>
<div class="t" style="left:1060.2px;top:606.55px;font-size:15.5px;line-height:15.5px;color:#000;">Spd/Pwr</div>
<div class="t" style="left:1129.5px;top:606.55px;font-size:15.5px;line-height:15.5px;color:#000;">Output</div>
<div class="t" style="left:1187px;top:606.55px;font-size:15.5px;line-height:15.5px;color:#000;">Show</div>
<div class="t" style="left:1233px;top:606.55px;font-size:15.5px;line-height:15.5px;color:#000;">Air</div>
<div style="position:absolute;left:1388.6px;top:628.5px;width:26.800000000000182px;height:25.899999999999977px;box-sizing:border-box;border:1px solid #adadad;border-radius:3px;background:linear-gradient(#fdfdfd,#eeeeee);"></div>
<div style="position:absolute;left:1388.6px;top:655.6px;width:26.800000000000182px;height:27.0px;box-sizing:border-box;border:1px solid #adadad;border-radius:3px;background:linear-gradient(#fdfdfd,#eeeeee);"></div>
<div style="position:absolute;left:1388.6px;top:710.4px;width:26.800000000000182px;height:27.100000000000023px;box-sizing:border-box;border:1px solid #adadad;border-radius:3px;background:linear-gradient(#fdfdfd,#eeeeee);"></div>
<div style="position:absolute;left:1388.6px;top:765.6px;width:26.800000000000182px;height:26.799999999999955px;box-sizing:border-box;border:1px solid #adadad;border-radius:3px;background:linear-gradient(#fdfdfd,#eeeeee);"></div>
<div style="position:absolute;left:1388.6px;top:793.9px;width:26.800000000000182px;height:25.899999999999977px;box-sizing:border-box;border:1px solid #adadad;border-radius:3px;background:linear-gradient(#fdfdfd,#eeeeee);"></div>
<svg style="position:absolute;left:0;top:0;pointer-events:none" width="1418" height="830"><path d="M1397 644L1401.9 639.2L1406.8 644" fill="none" stroke="#000" stroke-width="2.6"/><path d="M1397 666.5L1401.9 671.3L1406.8 666.5" fill="none" stroke="#000" stroke-width="2.6"/><path d="M1396 718.5H1408M1399.5 718.5V716.5H1404.5V718.5" fill="none" stroke="#000" stroke-width="1.6"/><path d="M1397.3 720.5H1406.7L1406 731.5H1398Z" fill="none" stroke="#000" stroke-width="1.6"/><path d="M1400 722V730M1402 722V730M1404 722V730" stroke="#000" stroke-width="0.8"/><path d="M1395 772.5H1400.5L1402.5 775V784.5H1395Z" fill="#fff" stroke="#000" stroke-width="1.3"/><path d="M1400 777.5H1406L1408.5 780V789.5H1400Z" fill="#fff" stroke="#000" stroke-width="1.3"/><path d="M1401.8 781.5H1406.5M1401.8 783.7H1406.5M1401.8 785.9H1406.5" stroke="#000" stroke-width="0.9"/><path d="M1396.5 776H1399M1396.5 778.3H1399M1396.5 780.6H1399" stroke="#000" stroke-width="0.9"/><path d="M1396 799.5H1406V814.5H1396Z" fill="#000"/><rect x="1399" y="797.5" width="4" height="3" fill="#000"/><path d="M1401 804H1405.5L1408.5 807V816H1401Z" fill="#fff" stroke="#000" stroke-width="1.2"/><path d="M1402.8 809H1407M1402.8 811.2H1407M1402.8 813.4H1407" stroke="#000" stroke-width="0.9"/></svg>
<svg style="position:absolute;left:929px;top:775px" width="4" height="18"><rect x="1" y="0" width="1" height="1" fill="#aaa"/><rect x="1" y="3" width="1" height="1" fill="#aaa"/><rect x="1" y="6" width="1" height="1" fill="#aaa"/><rect x="1" y="9" width="1" height="1" fill="#aaa"/><rect x="1" y="12" width="1" height="1" fill="#aaa"/><rect x="1" y="15" width="1" height="1" fill="#aaa"/></svg>
<div style="position:absolute;left:935.1px;top:854px;width:482.9px;height:97.70000000000005px;box-sizing:border-box;border:1px solid #cfcfcf;border-radius:2px;background:#ececec;"></div>
<div class="t" style="right:307.29999999999995px;top:865.65px;font-size:15.5px;line-height:15.5px;color:#6e6e6e;text-align:right;">Layer Color</div>
<div style="position:absolute;left:1117.4px;top:858.3px;width:82.5px;height:28.40000000000009px;box-sizing:border-box;border:1px solid #7a7a7a;background:#ececec;"></div>
<div class="t" style="right:307.29999999999995px;top:895.45px;font-size:15.5px;line-height:15.5px;color:#6e6e6e;text-align:right;">Pass Count</div>
<div style="position:absolute;left:1117.4px;top:889.9px;width:82.5px;height:25.600000000000023px;box-sizing:border-box;border:1px solid #c0c0c0;border-radius:3px;background:#f0f0f0;"></div>
<div style="position:absolute;left:1181.7px;top:890.9px;width:1.0px;height:23.600000000000023px;box-sizing:border-box;background:#d0d0d0;"></div>
<div class="t" style="right:242.29999999999995px;top:895.95px;font-size:15.5px;line-height:15.5px;color:#6e6e6e;text-align:right;">1</div>
<svg style="position:absolute;left:1185.8000000000002px;top:893.7px" width="10" height="18"><path d="M0.5 6.7L5 1.6L9.5 6.7Z" fill="#a0a0a0"/><path d="M0.5 11.9L5 17L9.5 11.9Z" fill="#a0a0a0"/></svg>
<div class="t" style="right:307.29999999999995px;top:925.25px;font-size:15.5px;line-height:15.5px;color:#6e6e6e;text-align:right;">Interval (mm)</div>
<div style="position:absolute;left:1117.4px;top:919.7px;width:82.5px;height:25.699999999999932px;box-sizing:border-box;border:1px solid #c0c0c0;border-radius:3px;background:#f0f0f0;"></div>
<div style="position:absolute;left:1181.7px;top:920.7px;width:1.0px;height:23.699999999999932px;box-sizing:border-box;background:#d0d0d0;"></div>
<div class="t" style="right:242.29999999999995px;top:925.80px;font-size:15.5px;line-height:15.5px;color:#6e6e6e;text-align:right;">0.100</div>
<svg style="position:absolute;left:1185.8000000000002px;top:923.55px" width="10" height="18"><path d="M0.5 6.7L5 1.6L9.5 6.7Z" fill="#a0a0a0"/><path d="M0.5 11.9L5 17L9.5 11.9Z" fill="#a0a0a0"/></svg>
<div class="t" style="right:109.20000000000005px;top:865.65px;font-size:15.5px;line-height:15.5px;color:#6e6e6e;text-align:right;">Speed (mm/s)</div>
<div style="position:absolute;left:1315.9px;top:860px;width:92.29999999999995px;height:26px;box-sizing:border-box;border:1px solid #c0c0c0;border-radius:3px;background:#f0f0f0;"></div>
<div style="position:absolute;left:1391.4px;top:861px;width:1.0px;height:24px;box-sizing:border-box;background:#d0d0d0;"></div>
<div class="t" style="right:32.59999999999991px;top:866.25px;font-size:15.5px;line-height:15.5px;color:#6e6e6e;text-align:right;">0.02</div>
<svg style="position:absolute;left:1394.8000000000002px;top:864.0px" width="10" height="18"><path d="M0.5 6.7L5 1.6L9.5 6.7Z" fill="#a0a0a0"/><path d="M0.5 11.9L5 17L9.5 11.9Z" fill="#a0a0a0"/></svg>
<div class="t" style="right:109.20000000000005px;top:895.45px;font-size:15.5px;line-height:15.5px;color:#6e6e6e;text-align:right;">Power Max (%)</div>
<div style="position:absolute;left:1315.9px;top:889.9px;width:92.29999999999995px;height:25.600000000000023px;box-sizing:border-box;border:1px solid #c0c0c0;border-radius:3px;background:#f0f0f0;"></div>
<div style="position:absolute;left:1391.4px;top:890.9px;width:1.0px;height:23.600000000000023px;box-sizing:border-box;background:#d0d0d0;"></div>
<div class="t" style="right:32.59999999999991px;top:895.95px;font-size:15.5px;line-height:15.5px;color:#6e6e6e;text-align:right;">0.00</div>
<svg style="position:absolute;left:1394.8000000000002px;top:893.7px" width="10" height="18"><path d="M0.5 6.7L5 1.6L9.5 6.7Z" fill="#a0a0a0"/><path d="M0.5 11.9L5 17L9.5 11.9Z" fill="#a0a0a0"/></svg>
<div class="t" style="right:109.20000000000005px;top:925.25px;font-size:15.5px;line-height:15.5px;color:#6e6e6e;text-align:right;">Power Min (%)</div>
<div style="position:absolute;left:1315.9px;top:919.7px;width:92.29999999999995px;height:25.699999999999932px;box-sizing:border-box;border:1px solid #c0c0c0;border-radius:3px;background:#f0f0f0;"></div>
<div style="position:absolute;left:1391.4px;top:920.7px;width:1.0px;height:23.699999999999932px;box-sizing:border-box;background:#d0d0d0;"></div>
<div class="t" style="right:32.59999999999991px;top:925.80px;font-size:15.5px;line-height:15.5px;color:#6e6e6e;text-align:right;">0.00</div>
<svg style="position:absolute;left:1394.8000000000002px;top:923.55px" width="10" height="18"><path d="M0.5 6.7L5 1.6L9.5 6.7Z" fill="#a0a0a0"/><path d="M0.5 11.9L5 17L9.5 11.9Z" fill="#a0a0a0"/></svg>
<div style="position:absolute;left:933.3px;top:955px;width:483.70000000000005px;height:1px;box-sizing:border-box;background:#c2c2c2;"></div>
<div style="position:absolute;left:933.3px;top:955px;width:134.20000000000005px;height:28.299999999999955px;box-sizing:border-box;border:1px solid #c2c2c2;border-radius:0 0 3px 3px;background:linear-gradient(#dcdcdc,#e2e2e2);"></div>
<div class="t" style="left:850.4px;width:300px;text-align:center;top:962.75px;font-size:15.8px;line-height:15.8px;color:#000;">Material Library</div>
<div style="position:absolute;left:1067.5px;top:954.2px;width:113.09999999999991px;height:30.5px;box-sizing:border-box;border:1px solid #b8b8b8;border-top:none;border-radius:0 0 3px 3px;background:linear-gradient(#f3f3f3,#fbfbfb);"></div>
<div class="t" style="left:974.05px;width:300px;text-align:center;top:963.70px;font-size:15.5px;line-height:15.5px;color:#000;">Cuts / Layers</div>
<svg style="position:absolute;left:1164px;top:987px" width="24" height="4"><rect x="0" y="1" width="1" height="1" fill="#aaa"/><rect x="3" y="1" width="1" height="1" fill="#aaa"/><rect x="6" y="1" width="1" height="1" fill="#aaa"/><rect x="9" y="1" width="1" height="1" fill="#aaa"/><rect x="12" y="1" width="1" height="1" fill="#aaa"/><rect x="15" y="1" width="1" height="1" fill="#aaa"/><rect x="18" y="1" width="1" height="1" fill="#aaa"/><rect x="21" y="1" width="1" height="1" fill="#aaa"/></svg>
<div style="position:absolute;left:933px;top:992.8px;width:484px;height:21.100000000000023px;box-sizing:border-box;background:linear-gradient(90deg,#000 0%,#3a0c0c 18%,#7a1a1a 38%,#c02a2a 58%,#cc4a30 78%,#e07a30 100%);"></div>
<div class="t" style="left:939.5px;top:996.40px;font-size:15.5px;line-height:15.5px;color:#fff;">Laser</div>
<svg style="position:absolute;left:1389px;top:997.3499999999999px" width="28" height="12"><rect x="1.5" y="0.5" width="10" height="10" rx="2" fill="none" stroke="#666" stroke-width="1"/><rect x="3.5" y="4.5" width="4" height="4" fill="none" stroke="#666"/><path d="M5.5 4.5V2.5H9.5V6.5H7.5" fill="none" stroke="#666"/><rect x="15.5" y="0.5" width="10" height="10" rx="2" fill="none" stroke="#666" stroke-width="1"/><path d="M17.5 2.5L23.5 8.5M23.5 2.5L17.5 8.5" stroke="#666" stroke-width="1.5"/></svg>
<div class="t" style="left:934.8px;top:1017.75px;font-size:15.5px;line-height:15.5px;color:#000;">Ready</div>
<div style="position:absolute;left:934.1px;top:1036.4px;width:117.69999999999993px;height:35.09999999999991px;box-sizing:border-box;border:1px solid #adadad;border-radius:3px;background:linear-gradient(#fdfdfd,#eeeeee);"></div>
<div class="t" style="left:981.8px;top:1047.45px;font-size:16px;line-height:16px;color:#000;">Pause</div>
<div style="position:absolute;left:1055.2px;top:1036.4px;width:118.39999999999986px;height:35.09999999999991px;box-sizing:border-box;border:1px solid #adadad;border-radius:3px;background:linear-gradient(#fdfdfd,#eeeeee);"></div>
<div class="t" style="left:1106.5px;top:1047.45px;font-size:16px;line-height:16px;color:#000;">Stop</div>
<div style="position:absolute;left:1177.1px;top:1036.4px;width:117.70000000000005px;height:35.09999999999991px;box-sizing:border-box;border:1px solid #adadad;border-radius:3px;background:linear-gradient(#fdfdfd,#eeeeee);"></div>
<div class="t" style="left:1227.5px;top:1047.45px;font-size:16px;line-height:16px;color:#8a8a8a;">Start</div>
<div style="position:absolute;left:1298.3px;top:1036.4px;width:117.70000000000005px;height:35.09999999999991px;box-sizing:border-box;border:1px solid #adadad;border-radius:3px;background:linear-gradient(#fdfdfd,#eeeeee);"></div>
<div class="t" style="left:1345.5px;top:1047.45px;font-size:16px;line-height:16px;color:#000;">Send</div>
<div style="position:absolute;left:934.1px;top:1073.6px;width:117.69999999999993px;height:33.90000000000009px;box-sizing:border-box;border:1px solid #adadad;border-radius:3px;background:linear-gradient(#fdfdfd,#eeeeee);"></div>
<div class="t" style="left:980px;top:1084.05px;font-size:16px;line-height:16px;color:#000;">Frame</div>
<div style="position:absolute;left:1055.2px;top:1073.6px;width:118.39999999999986px;height:33.90000000000009px;box-sizing:border-box;border:1px solid #adadad;border-radius:3px;background:linear-gradient(#fdfdfd,#eeeeee);"></div>
<div class="t" style="left:1100.5px;top:1084.05px;font-size:16px;line-height:16px;color:#000;">Frame</div>
<div style="position:absolute;left:1177.1px;top:1073.6px;width:117.70000000000005px;height:33.90000000000009px;box-sizing:border-box;border:1px solid #adadad;border-radius:3px;background:linear-gradient(#fdfdfd,#eeeeee);"></div>
<div class="t" style="left:1085.9499999999998px;width:300px;text-align:center;top:1084.05px;font-size:16px;line-height:16px;color:#000;">Save RD file</div>
<div style="position:absolute;left:1298.3px;top:1073.6px;width:117.70000000000005px;height:33.90000000000009px;box-sizing:border-box;border:1px solid #adadad;border-radius:3px;background:linear-gradient(#fdfdfd,#eeeeee);"></div>
<div class="t" style="left:1207.15px;width:300px;text-align:center;top:1084.05px;font-size:16px;line-height:16px;color:#000;">Run RD file</div>
<div style="position:absolute;left:934.1px;top:1109px;width:105.30000000000007px;height:28px;box-sizing:border-box;border:1px solid #adadad;border-radius:3px;background:linear-gradient(#fdfdfd,#eeeeee);"></div>
<div class="t" style="left:973px;top:1116.50px;font-size:16px;line-height:16px;color:#000;">Home</div>
<div style="position:absolute;left:1045.7px;top:1109px;width:105.09999999999991px;height:28px;box-sizing:border-box;border:1px solid #adadad;border-radius:3px;background:linear-gradient(#fdfdfd,#eeeeee);"></div>
<div class="t" style="left:948.25px;width:300px;text-align:center;top:1116.50px;font-size:16px;line-height:16px;color:#000;">Go to Origin</div>
<div class="t" style="left:1187.6px;top:1116.35px;font-size:15.5px;line-height:15.5px;color:#000;">Start From:</div>
<div style="position:absolute;left:1269.5px;top:1109px;width:145.79999999999995px;height:28px;box-sizing:border-box;border:1px solid #b9b9b9;border-radius:3px;background:linear-gradient(#fbfbfb,#efefef);"></div>
<div class="t" style="left:1274px;top:1116.30px;font-size:16px;line-height:16px;color:#000;">User Origin</div>
<svg style="position:absolute;left:1395.5px;top:1120.0px" width="11" height="6"><path d="M0 0H11L5.5 6Z" fill="#5a5a5a"/></svg>
<svg style="position:absolute;left:934px;top:1146px" width="17" height="10"><rect x="0.6" y="1" width="8.4" height="7.8" rx="1.2" fill="#08d808" stroke="#1a1a1a" stroke-width="1.1"/><rect x="7.6" y="0.6" width="8.2" height="8.6" rx="3" fill="#dfe6df" stroke="#1a1a1a" stroke-width="1.1"/></svg>
<div class="t" style="left:956.2px;top:1144.25px;font-size:15.5px;line-height:15.5px;color:#000;">Enable Rotary</div>
<svg style="position:absolute;left:900px;top:1125px;overflow:visible" width="170" height="52"><ellipse cx="85.0" cy="26.0" rx="85.0" ry="26.0" fill="none" stroke="#ff0000" stroke-width="3"/></svg>
<div class="t" style="left:1191.2px;top:1159.25px;font-size:15.5px;line-height:15.5px;color:#000;">Job Origin</div>
<div style="position:absolute;left:1272.3px;top:1142.4px;width:141.20000000000005px;height:49.19999999999982px;box-sizing:border-box;border:1px solid #d6d6d6;background:#ebebeb;"></div>
<svg style="position:absolute;left:1273px;top:1143.2px" width="16" height="16"><circle cx="8" cy="8" r="6" fill="#ffffff" stroke="#6a6a6a" stroke-width="1"/></svg>
<svg style="position:absolute;left:1318.7px;top:1143.2px" width="16" height="16"><circle cx="8" cy="8" r="6" fill="#ffffff" stroke="#6a6a6a" stroke-width="1"/></svg>
<svg style="position:absolute;left:1364px;top:1143.2px" width="16" height="16"><circle cx="8" cy="8" r="6" fill="#ffffff" stroke="#6a6a6a" stroke-width="1"/></svg>
<svg style="position:absolute;left:1273px;top:1157.9px" width="16" height="16"><circle cx="8" cy="8" r="6" fill="#ffffff" stroke="#6a6a6a" stroke-width="1"/></svg>
<svg style="position:absolute;left:1318.7px;top:1157.9px" width="16" height="16"><circle cx="8" cy="8" r="6" fill="#ffffff" stroke="#6a6a6a" stroke-width="1"/><circle cx="8" cy="8" r="3" fill="#333"/></svg>
<svg style="position:absolute;left:1364px;top:1157.9px" width="16" height="16"><circle cx="8" cy="8" r="6" fill="#ffffff" stroke="#6a6a6a" stroke-width="1"/></svg>
<svg style="position:absolute;left:1273px;top:1172.6px" width="16" height="16"><circle cx="8" cy="8" r="6" fill="#ffffff" stroke="#6a6a6a" stroke-width="1"/></svg>
<svg style="position:absolute;left:1318.7px;top:1172.6px" width="16" height="16"><circle cx="8" cy="8" r="6" fill="#ffffff" stroke="#6a6a6a" stroke-width="1"/></svg>
<svg style="position:absolute;left:1364px;top:1172.6px" width="16" height="16"><circle cx="8" cy="8" r="6" fill="#ffffff" stroke="#6a6a6a" stroke-width="1"/></svg>
<svg style="position:absolute;left:934px;top:1201px" width="17" height="10"><rect x="0.6" y="1" width="8.4" height="7.8" rx="1.2" fill="#08d808" stroke="#1a1a1a" stroke-width="1.1"/><rect x="7.6" y="0.6" width="8.2" height="8.6" rx="3" fill="#dfe6df" stroke="#1a1a1a" stroke-width="1.1"/></svg>
<div class="t" style="left:956.2px;top:1199.55px;font-size:15.5px;line-height:15.5px;color:#000;">Cut Selected Graphics</div>
<svg style="position:absolute;left:934px;top:1230px" width="17" height="10"><rect x="7.2" y="1" width="9" height="7.8" rx="1.2" fill="#8c0a0a" stroke="#1a1a1a" stroke-width="1.1"/><rect x="0.6" y="0.6" width="8.2" height="8.6" rx="3" fill="#ddd6d6" stroke="#1a1a1a" stroke-width="1.1"/></svg>
<div class="t" style="left:956.2px;top:1228.60px;font-size:15.8px;line-height:15.8px;color:#000;">Use Selection Origin</div>
<div style="position:absolute;left:1157.1px;top:1193px;width:258.20000000000005px;height:27.40000000000009px;box-sizing:border-box;border:1px solid #adadad;border-radius:3px;background:linear-gradient(#fdfdfd,#eeeeee);"></div>
<div class="t" style="left:1229.5px;top:1200.20px;font-size:16px;line-height:16px;color:#000;">Show Last Position</div>
<div style="position:absolute;left:1157.1px;top:1222.1px;width:258.20000000000005px;height:27.100000000000136px;box-sizing:border-box;border:1px solid #adadad;border-radius:3px;background:linear-gradient(#fdfdfd,#eeeeee);"></div>
<div class="t" style="left:1136.1999999999998px;width:300px;text-align:center;top:1229.15px;font-size:16px;line-height:16px;color:#000;">Optimization Settings</div>
<div style="position:absolute;left:934.1px;top:1251.3px;width:79.69999999999993px;height:28.799999999999955px;box-sizing:border-box;border:1px solid #adadad;border-radius:3px;background:linear-gradient(#fdfdfd,#eeeeee);"></div>
<div class="t" style="left:823.95px;width:300px;text-align:center;top:1259.30px;font-size:15.8px;line-height:15.8px;color:#000;">Devices</div>
<div style="position:absolute;left:1020.1px;top:1251.3px;width:395.19999999999993px;height:28.799999999999955px;box-sizing:border-box;border:1px solid #b9b9b9;border-radius:3px;background:linear-gradient(#fbfbfb,#efefef);"></div>
<div class="t" style="left:1050.5px;top:1259.00px;font-size:16px;line-height:16px;color:#000;">FrikkenLaser</div>
<svg style="position:absolute;left:1395.5px;top:1262.6999999999998px" width="11" height="6"><path d="M0 0H11L5.5 6Z" fill="#5a5a5a"/></svg>
<svg style="position:absolute;left:0;top:0;pointer-events:none" width="1418" height="1300"><rect x="964" y="1046" width="5" height="16" rx="0.8" fill="#000"/><rect x="972.7" y="1046" width="5.5" height="16" rx="0.8" fill="#000"/><rect x="1089.5" y="1046" width="16" height="16" fill="#000"/><path d="M1211 1045.5L1225.5 1054L1211 1062.5Z" fill="#7a7a7a"/><path d="M1336.5 1046L1332 1051H1341Z" fill="#000"/><rect x="1335" y="1051" width="3" height="3.5" fill="#000"/><rect x="1335" y="1056" width="3" height="2" fill="#000"/><rect x="1335" y="1059.5" width="3" height="2" fill="#000"/><path d="M962.5 1088V1083.5H967M971.5 1083.5H976V1088M976 1092.5V1097H971.5M967 1097H962.5V1092.5" fill="none" stroke="#000" stroke-width="2.6"/><circle cx="1090" cy="1090.3" r="6.8" fill="none" stroke="#000" stroke-width="2.4" stroke-dasharray="3.6 2.2"/><path d="M957.5 1124.5L965.5 1116.5L973.5 1124.5" fill="none" stroke="#000" stroke-width="2"/><path d="M959.5 1123V1131.5H971.5V1123" fill="none" stroke="#000" stroke-width="2"/><rect x="963.8" y="1126" width="3.4" height="5.5" fill="#000"/><path d="M1213 1206.5H1216M1221 1206.5H1224M1218.5 1199.5V1202.5M1218.5 1210.5V1213.5" stroke="#000" stroke-width="1.6"/><path d="M1216.5 1206.5H1220.5M1218.5 1204.5V1208.5" stroke="#e00" stroke-width="1.8"/><rect x="1026.4" y="1255.5" width="19.3" height="19.3" fill="#2a7fd0"/><ellipse cx="1036" cy="1264" rx="7.5" ry="5" fill="none" stroke="#fff" stroke-width="1.1"/><text x="1036" y="1266.5" font-family="Liberation Sans" font-size="6.5" font-style="italic" font-weight="bold" fill="#fff" text-anchor="middle">RD</text><rect x="1028" y="1271" width="16" height="1.5" fill="#9cc8f0"/></svg>
<div style="position:absolute;left:994.5px;top:1320px;width:422.5px;height:1px;box-sizing:border-box;background:#c2c2c2;"></div>
<div style="position:absolute;left:933.3px;top:1319px;width:61.200000000000045px;height:32px;box-sizing:border-box;border:1px solid #b8b8b8;border-top:none;border-radius:0 0 3px 3px;background:linear-gradient(#f3f3f3,#fbfbfb);"></div>
<div class="t" style="left:813.9px;width:300px;text-align:center;top:1328.25px;font-size:15.5px;line-height:15.5px;color:#000;">Laser</div>
<div style="position:absolute;left:994.5px;top:1320px;width:61.799999999999955px;height:28.59999999999991px;box-sizing:border-box;border:1px solid #c2c2c2;border-radius:0 0 3px 3px;background:linear-gradient(#dcdcdc,#e2e2e2);"></div>
<div class="t" style="left:875.4000000000001px;width:300px;text-align:center;top:1327.05px;font-size:15.5px;line-height:15.5px;color:#000;">Move</div>
<div style="position:absolute;left:0px;top:1352px;width:1417px;height:42px;box-sizing:border-box;background:linear-gradient(#fafafa,#efefef);"></div>
<div style="position:absolute;left:0px;top:1394px;width:1417px;height:1px;box-sizing:border-box;background:#b9b9b9;"></div>
<div style="position:absolute;left:0px;top:1395px;width:1417px;height:31px;box-sizing:border-box;background:#f0f0f0;"></div>
<div style="position:absolute;left:0px;top:1426px;width:1417px;height:1px;box-sizing:border-box;background:#fff;"></div>
<div style="position:absolute;left:0px;top:1427px;width:1418px;height:6px;box-sizing:border-box;background:#343635;"></div>
<div style="position:absolute;left:0px;top:1433px;width:1418px;height:3px;box-sizing:border-box;background:linear-gradient(90deg,#2a3a6a 0%,#4a4a8a 15%,#203060 25%,#5a7ac0 40%,#304070 55%,#6a3a5a 65%,#304a8a 75%,#5a8ad0 85%,#2a3a6a 100%);"></div>
<div style="position:absolute;left:5.8px;top:1360px;width:28.900000000000002px;height:28.700000000000045px;box-sizing:border-box;background:#88f888;"></div>
<div class="t" style="left:-129.75px;width:300px;text-align:center;top:1366.75px;font-size:15.5px;line-height:15.5px;color:#000;">28</div>
<div style="position:absolute;left:43.8px;top:1360px;width:29.200000000000003px;height:28.700000000000045px;box-sizing:border-box;background:#ffd966;"></div>
<div class="t" style="left:-91.6px;width:300px;text-align:center;top:1366.75px;font-size:15.5px;line-height:15.5px;color:#000;">29</div>
<div style="position:absolute;left:81px;top:1362px;width:1px;height:25px;box-sizing:border-box;background:#d8d8d8;"></div>
<div style="position:absolute;left:88.5px;top:1360px;width:29.200000000000003px;height:28.700000000000045px;box-sizing:border-box;background:#f26b21;"></div>
<div class="t" style="left:-46.900000000000006px;width:300px;text-align:center;top:1366.75px;font-size:15.5px;line-height:15.5px;color:#000;">T1</div>
<div style="position:absolute;left:126.5px;top:1360px;width:29.19999999999999px;height:28.700000000000045px;box-sizing:border-box;background:#1e96d8;"></div>
<div class="t" style="left:-8.900000000000006px;width:300px;text-align:center;top:1366.75px;font-size:15.5px;line-height:15.5px;color:#fff;">T2</div>
<div class="t" style="left:79px;top:1405.55px;font-size:15.5px;line-height:15.5px;color:#000;">Found KT332N</div>
<svg style="position:absolute;left:60.5px;top:1383px;overflow:visible" width="141.0" height="47"><ellipse cx="70.5" cy="23.5" rx="70.5" ry="23.5" fill="none" stroke="#ff0000" stroke-width="3"/></svg>
</body></html>
